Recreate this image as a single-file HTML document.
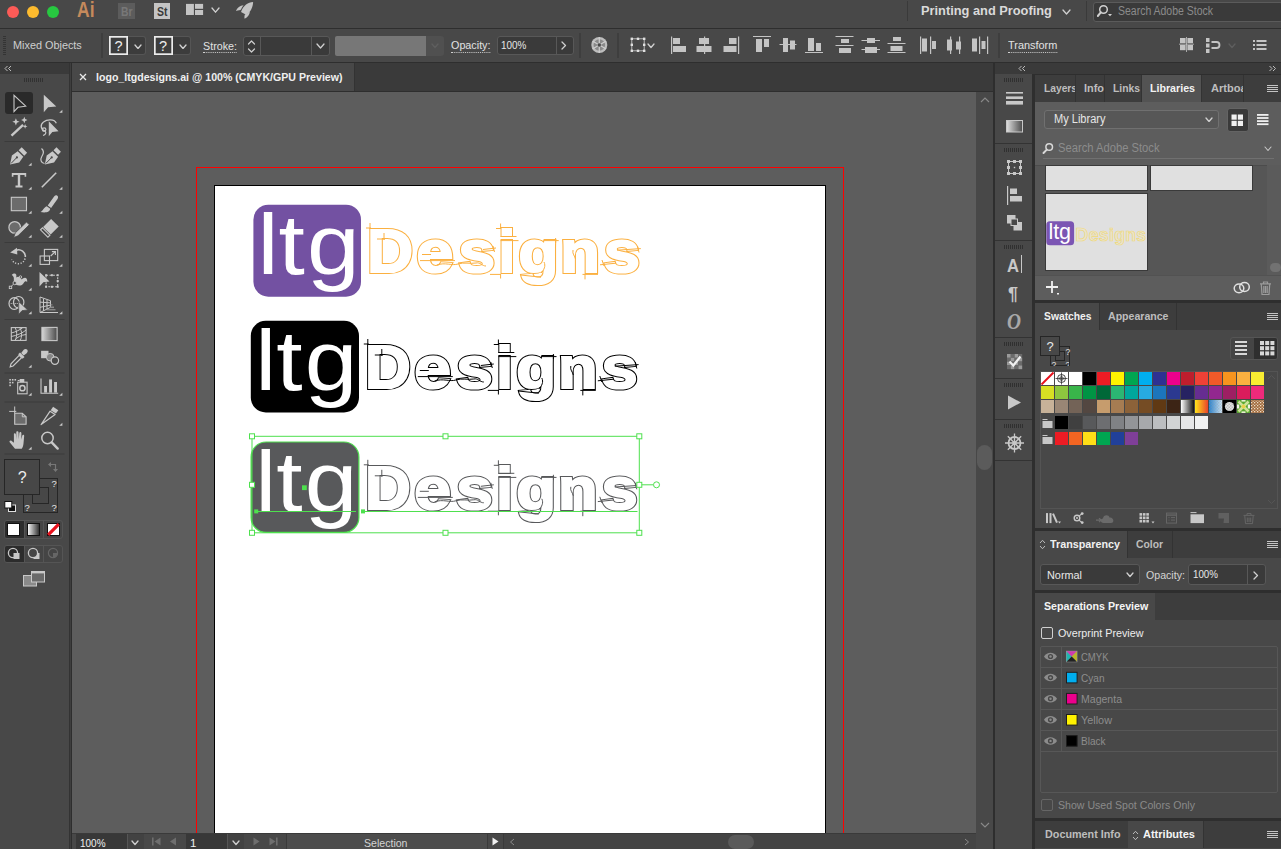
<!DOCTYPE html>
<html lang="en"><head><meta charset="utf-8"><title>logo_ltgdesigns.ai @ 100% (CMYK/GPU Preview)</title>
<style>
html,body{margin:0;padding:0;background:#2e2e2e;}
body{width:1281px;height:849px;overflow:hidden;position:relative;font-family:"Liberation Sans",sans-serif;}
.b{position:absolute;box-sizing:border-box;display:block;}
.t{position:absolute;white-space:nowrap;line-height:1;transform-origin:0 0;display:block;}
</style></head>
<body>
<!-- part_frame -->
<div class="b" style="left:0px;top:0px;width:1281px;height:849px;background:#2e2e2e;"></div>
<div class="b" style="left:0px;top:0px;width:1281px;height:28px;background:#484848;"></div>
<div class="b" style="left:0px;top:29px;width:1281px;height:33px;background:#484848;"></div>
<div class="b" style="left:0px;top:63px;width:69px;height:786px;background:#484848;"></div>
<div class="b" style="left:0px;top:63px;width:69px;height:11px;background:#3a3a3a;"></div>
<div class="b" style="left:69px;top:63px;width:1px;height:786px;background:#333;"></div>
<div class="b" style="left:70px;top:63px;width:1px;height:786px;background:#3e3e3e;"></div>
<div class="b" style="left:72px;top:63px;width:921px;height:28px;background:#3a3a3a;"></div>
<div class="b" style="left:72px;top:63px;width:282px;height:28px;background:#484848;"></div>
<div class="b" style="left:354px;top:63px;width:1px;height:28px;background:#333;"></div>
<div class="b" style="left:72px;top:92px;width:904px;height:741px;background:#5d5d5d;"></div>
<div class="b" style="left:976px;top:92px;width:17px;height:741px;background:#484848;"></div>
<div class="b" style="left:977px;top:445px;width:15px;height:25px;background:#5b5b5b;border-radius:7.5px;"></div>
<div class="b" style="left:72px;top:833px;width:921px;height:16px;background:#484848;"></div>
<div class="b" style="left:995px;top:63px;width:286px;height:11px;background:#3a3a3a;"></div>
<div class="b" style="left:995px;top:74px;width:37px;height:775px;background:#484848;"></div>
<!-- part_canvas -->
<div class="b" style="left:196px;top:167px;width:648px;height:666px;border:1px solid #f00;border-bottom:none;"></div>
<div class="b" style="left:214px;top:185px;width:612px;height:648px;background:#fff;border:1px solid #000;border-bottom:none;"></div>
<svg class="b" style="left:0px;top:0px;" width="1281" height="849"><rect x="253.4" y="204.7" width="107.6" height="92" rx="15" fill="#7351a2"/><text transform="translate(257.46 274) scale(1.1 1)" x="0.00 19.20 45.06" y="0" font-family="Liberation Sans, sans-serif" font-size="86" fill="#fff">ltg</text><text y="272.30" font-family="Liberation Sans, sans-serif" font-weight="bold" stroke-linejoin="miter" stroke-miterlimit="3" fill="#fbb040" stroke="#fbb040" stroke-width="4.20"><tspan x="367.25" font-size="62" textLength="45.82" lengthAdjust="spacingAndGlyphs">D</tspan><tspan x="416.42" font-size="59.5" textLength="36.72" lengthAdjust="spacingAndGlyphs">e</tspan><tspan x="458.50" font-size="59.5" textLength="36.49" lengthAdjust="spacingAndGlyphs">s</tspan><tspan x="498.51" font-size="59.5" textLength="16.64" lengthAdjust="spacingAndGlyphs">i</tspan><tspan x="518.43" font-size="59.5" textLength="39.84" lengthAdjust="spacingAndGlyphs">g</tspan><tspan x="560.32" font-size="59.5" textLength="39.59" lengthAdjust="spacingAndGlyphs">n</tspan><tspan x="603.83" font-size="59.5" textLength="36.14" lengthAdjust="spacingAndGlyphs">s</tspan></text><text y="272.30" font-family="Liberation Sans, sans-serif" font-weight="bold" stroke-linejoin="miter" stroke-miterlimit="3" fill="#fff" stroke="#fff" stroke-width="2.20"><tspan x="367.25" font-size="62" textLength="45.82" lengthAdjust="spacingAndGlyphs">D</tspan><tspan x="416.42" font-size="59.5" textLength="36.72" lengthAdjust="spacingAndGlyphs">e</tspan><tspan x="458.50" font-size="59.5" textLength="36.49" lengthAdjust="spacingAndGlyphs">s</tspan><tspan x="498.51" font-size="59.5" textLength="16.64" lengthAdjust="spacingAndGlyphs">i</tspan><tspan x="518.43" font-size="59.5" textLength="39.84" lengthAdjust="spacingAndGlyphs">g</tspan><tspan x="560.32" font-size="59.5" textLength="39.59" lengthAdjust="spacingAndGlyphs">n</tspan><tspan x="603.83" font-size="59.5" textLength="36.14" lengthAdjust="spacingAndGlyphs">s</tspan></text><path transform="translate(0 0)" d="M366 228H371M370 223V229M377 239H385M384 233V240M422 254.5H431M420 260.6H455M437 265C445 262 452 266 458 264C464 262 470 264 476 263C480 262 482 266 486 266M483 249.5L496 248M493 246L494.5 252M496 228.5H501M500.6 223.5V229M500.6 236.5H516.5M500.6 240.6H518.5M490 274.4H501M500.6 274V278.5M543.7 240.6H558.7M555.6 238V243M520.6 275L541 277.2M544 262C546 266 544 270 541 273M573 250C572 254 575 256 575.5 259M585 274V279.4M582.5 274.4H598M600 264.8L616 263.2M602 260L604 266M617 250.2L640.8 248.6M637.5 246L639 252.5" stroke="#fbb040" stroke-width="1" fill="none"/><rect x="250.8" y="320.8" width="108.2" height="91.7" rx="15" fill="#000"/><text transform="translate(255.26 390.3) scale(1.1 1)" x="0.00 19.20 45.06" y="0" font-family="Liberation Sans, sans-serif" font-size="86" fill="#fff">ltg</text><text y="388.30" font-family="Liberation Sans, sans-serif" font-weight="bold" stroke-linejoin="miter" stroke-miterlimit="3" fill="#000" stroke="#000" stroke-width="4.20"><tspan x="365.05" font-size="62" textLength="45.82" lengthAdjust="spacingAndGlyphs">D</tspan><tspan x="414.22" font-size="59.5" textLength="36.72" lengthAdjust="spacingAndGlyphs">e</tspan><tspan x="456.30" font-size="59.5" textLength="36.49" lengthAdjust="spacingAndGlyphs">s</tspan><tspan x="496.31" font-size="59.5" textLength="16.64" lengthAdjust="spacingAndGlyphs">i</tspan><tspan x="516.23" font-size="59.5" textLength="39.84" lengthAdjust="spacingAndGlyphs">g</tspan><tspan x="558.12" font-size="59.5" textLength="39.59" lengthAdjust="spacingAndGlyphs">n</tspan><tspan x="601.62" font-size="59.5" textLength="36.14" lengthAdjust="spacingAndGlyphs">s</tspan></text><text y="388.30" font-family="Liberation Sans, sans-serif" font-weight="bold" stroke-linejoin="miter" stroke-miterlimit="3" fill="#fff" stroke="#fff" stroke-width="2.20"><tspan x="365.05" font-size="62" textLength="45.82" lengthAdjust="spacingAndGlyphs">D</tspan><tspan x="414.22" font-size="59.5" textLength="36.72" lengthAdjust="spacingAndGlyphs">e</tspan><tspan x="456.30" font-size="59.5" textLength="36.49" lengthAdjust="spacingAndGlyphs">s</tspan><tspan x="496.31" font-size="59.5" textLength="16.64" lengthAdjust="spacingAndGlyphs">i</tspan><tspan x="516.23" font-size="59.5" textLength="39.84" lengthAdjust="spacingAndGlyphs">g</tspan><tspan x="558.12" font-size="59.5" textLength="39.59" lengthAdjust="spacingAndGlyphs">n</tspan><tspan x="601.62" font-size="59.5" textLength="36.14" lengthAdjust="spacingAndGlyphs">s</tspan></text><path transform="translate(-2.2 116)" d="M366 228H371M370 223V229M377 239H385M384 233V240M422 254.5H431M420 260.6H455M437 265C445 262 452 266 458 264C464 262 470 264 476 263C480 262 482 266 486 266M483 249.5L496 248M493 246L494.5 252M496 228.5H501M500.6 223.5V229M500.6 236.5H516.5M500.6 240.6H518.5M490 274.4H501M500.6 274V278.5M543.7 240.6H558.7M555.6 238V243M520.6 275L541 277.2M544 262C546 266 544 270 541 273M573 250C572 254 575 256 575.5 259M585 274V279.4M582.5 274.4H598M600 264.8L616 263.2M602 260L604 266M617 250.2L640.8 248.6M637.5 246L639 252.5" stroke="#000" stroke-width="1" fill="none"/><rect x="251.1" y="442" width="107.8" height="90.4" rx="15" fill="#58595b" stroke="#4ee04e" stroke-width="1.2"/><text transform="translate(255.26 511) scale(1.1 1)" x="0.00 19.20 45.06" y="0" font-family="Liberation Sans, sans-serif" font-size="86" fill="#fff">ltg</text><text y="509.10" font-family="Liberation Sans, sans-serif" font-weight="bold" stroke-linejoin="miter" stroke-miterlimit="3" fill="#58595b" stroke="#58595b" stroke-width="4.20"><tspan x="365.05" font-size="62" textLength="45.82" lengthAdjust="spacingAndGlyphs">D</tspan><tspan x="414.22" font-size="59.5" textLength="36.72" lengthAdjust="spacingAndGlyphs">e</tspan><tspan x="456.30" font-size="59.5" textLength="36.49" lengthAdjust="spacingAndGlyphs">s</tspan><tspan x="496.31" font-size="59.5" textLength="16.64" lengthAdjust="spacingAndGlyphs">i</tspan><tspan x="516.23" font-size="59.5" textLength="39.84" lengthAdjust="spacingAndGlyphs">g</tspan><tspan x="558.12" font-size="59.5" textLength="39.59" lengthAdjust="spacingAndGlyphs">n</tspan><tspan x="601.62" font-size="59.5" textLength="36.14" lengthAdjust="spacingAndGlyphs">s</tspan></text><text y="509.10" font-family="Liberation Sans, sans-serif" font-weight="bold" stroke-linejoin="miter" stroke-miterlimit="3" fill="#fff" stroke="#fff" stroke-width="2.20"><tspan x="365.05" font-size="62" textLength="45.82" lengthAdjust="spacingAndGlyphs">D</tspan><tspan x="414.22" font-size="59.5" textLength="36.72" lengthAdjust="spacingAndGlyphs">e</tspan><tspan x="456.30" font-size="59.5" textLength="36.49" lengthAdjust="spacingAndGlyphs">s</tspan><tspan x="496.31" font-size="59.5" textLength="16.64" lengthAdjust="spacingAndGlyphs">i</tspan><tspan x="516.23" font-size="59.5" textLength="39.84" lengthAdjust="spacingAndGlyphs">g</tspan><tspan x="558.12" font-size="59.5" textLength="39.59" lengthAdjust="spacingAndGlyphs">n</tspan><tspan x="601.62" font-size="59.5" textLength="36.14" lengthAdjust="spacingAndGlyphs">s</tspan></text><path transform="translate(-2.2 236.8)" d="M366 228H371M370 223V229M377 239H385M384 233V240M422 254.5H431M420 260.6H455M437 265C445 262 452 266 458 264C464 262 470 264 476 263C480 262 482 266 486 266M483 249.5L496 248M493 246L494.5 252M496 228.5H501M500.6 223.5V229M500.6 236.5H516.5M500.6 240.6H518.5M490 274.4H501M500.6 274V278.5M543.7 240.6H558.7M555.6 238V243M520.6 275L541 277.2M544 262C546 266 544 270 541 273M573 250C572 254 575 256 575.5 259M585 274V279.4M582.5 274.4H598M600 264.8L616 263.2M602 260L604 266M617 250.2L640.8 248.6M637.5 246L639 252.5" stroke="#58595b" stroke-width="1" fill="none"/><rect x="252" y="436.3" width="387.3" height="96.5" fill="none" stroke="#4ee04e" stroke-width="1"/><path d="M256 511.5H356M363 511.5H637.5" stroke="#4ee04e" stroke-width="1"/><path d="M639 484.8H653" stroke="#4ee04e" stroke-width="1"/><circle cx="656.5" cy="484.8" r="3" fill="#fff" stroke="#4ee04e" stroke-width="1"/><rect x="249.5" y="433.8" width="5" height="5" fill="#fff" stroke="#4ee04e" stroke-width="1"/><rect x="249.5" y="482.3" width="5" height="5" fill="#fff" stroke="#4ee04e" stroke-width="1"/><rect x="249.5" y="530.3" width="5" height="5" fill="#fff" stroke="#4ee04e" stroke-width="1"/><rect x="443.0" y="433.8" width="5" height="5" fill="#fff" stroke="#4ee04e" stroke-width="1"/><rect x="443.0" y="530.3" width="5" height="5" fill="#fff" stroke="#4ee04e" stroke-width="1"/><rect x="636.8" y="433.8" width="5" height="5" fill="#fff" stroke="#4ee04e" stroke-width="1"/><rect x="636.8" y="482.3" width="5" height="5" fill="#fff" stroke="#4ee04e" stroke-width="1"/><rect x="636.8" y="530.3" width="5" height="5" fill="#fff" stroke="#4ee04e" stroke-width="1"/><rect x="254.2" y="509.4" width="4" height="4" fill="#4ee04e"/><rect x="361" y="509.4" width="4" height="4" fill="#4ee04e"/><rect x="302" y="485.3" width="4.8" height="4.8" fill="#4ee04e"/></svg>
<!-- part_top -->
<div class="b" style="left:7px;top:6px;width:12px;height:12px;background:#fc5b57;border-radius:50%;"></div>
<div class="b" style="left:27px;top:6px;width:12px;height:12px;background:#fdbb2e;border-radius:50%;"></div>
<div class="b" style="left:47px;top:6px;width:12px;height:12px;background:#27c840;border-radius:50%;"></div>
<span class="t" style="left:77.00px;top:0.00px;font-size:21.5px;color:#c58a5c;font-family:'Liberation Sans',sans-serif;font-weight:bold;transform:scaleX(0.8140);">Ai</span>
<div class="b" style="left:118px;top:3px;width:16.5px;height:16px;background:#5c5c5c;"></div>
<span class="t" style="left:120.50px;top:5.50px;font-size:12px;color:#787878;font-family:'Liberation Sans',sans-serif;font-weight:bold;transform:scaleX(0.8623);">Br</span>
<div class="b" style="left:153.5px;top:3px;width:16.5px;height:16px;background:#c4c4c4;"></div>
<span class="t" style="left:156.50px;top:5.50px;font-size:12px;color:#3a3a3a;font-family:'Liberation Sans',sans-serif;font-weight:bold;transform:scaleX(0.8749);">St</span>
<svg class="b" style="left:186px;top:3px;" width="18" height="13"><rect x="0" y="0.9" width="7.9" height="11.1" fill="#c4c4c4"/><rect x="9" y="0.9" width="8.1" height="4.9" fill="#c4c4c4"/><rect x="9" y="7" width="8.1" height="5" fill="#c4c4c4"/></svg>
<svg class="b" style="left:211px;top:6.8px;" width="9" height="6.2"><path d="M1 1L4.5 5.2L8 1" fill="none" stroke="#d0d0d0" stroke-width="1.3" stroke-linecap="round" stroke-linejoin="round"/></svg>
<svg class="b" style="left:235px;top:1px;" width="20" height="19"><path d="M18.1 0.9C13 1.2 8.5 4 6 10.9L11.2 13.7C16 10.8 18 5.5 18.1 0.9Z" fill="#c4c4c4"/><path d="M8.6 4.3C5 4.6 2.2 6.8 0.9 10C3.6 9.6 5.2 9.2 6 8.6C6.6 7 7.4 5.6 8.6 4.3Z" fill="#c4c4c4"/><path d="M14.8 10.4C14.8 13.5 12.6 16.4 9.6 17.8C9.3 16 9.4 14.6 9.9 13.5C11.8 12.8 13.4 11.8 14.8 10.4Z" fill="#c4c4c4"/></svg>
<div class="b" style="left:907px;top:1px;width:1px;height:20px;background:#3a3a3a;"></div>
<span class="t" style="left:921.40px;top:4.00px;font-size:13px;color:#dadada;font-family:'Liberation Sans',sans-serif;font-weight:bold;transform:scaleX(0.9851);">Printing and Proofing</span>
<svg class="b" style="left:1062px;top:8.5px;" width="9" height="6"><path d="M1 1L4.5 5L8 1" fill="none" stroke="#d0d0d0" stroke-width="1.3" stroke-linecap="round" stroke-linejoin="round"/></svg>
<div class="b" style="left:1086px;top:1px;width:1px;height:20px;background:#3a3a3a;"></div>
<div class="b" style="left:1092.5px;top:1.5px;width:190px;height:20px;background:#3a3a3a;border:1px solid #5b5b5b;border-radius:3px;"></div>
<svg class="b" style="left:1097px;top:4px;" width="18" height="15"><circle cx="6.5" cy="5.5" r="3.8" fill="none" stroke="#d0d0d0" stroke-width="1.5"/><path d="M3.8 8.3L0.8 12" stroke="#d0d0d0" stroke-width="2" stroke-linecap="round"/><path d="M11 10h4l-2 2.2z" fill="#d0d0d0"/></svg>
<span class="t" style="left:1118.00px;top:5.00px;font-size:12px;color:#8b8b8b;font-family:'Liberation Sans',sans-serif;transform:scaleX(0.8736);">Search Adobe Stock</span>
<div class="b" style="left:3px;top:36px;width:3px;height:1px;background:#343434;"></div><div class="b" style="left:3px;top:38px;width:3px;height:1px;background:#343434;"></div><div class="b" style="left:3px;top:40px;width:3px;height:1px;background:#343434;"></div><div class="b" style="left:3px;top:42px;width:3px;height:1px;background:#343434;"></div><div class="b" style="left:3px;top:44px;width:3px;height:1px;background:#343434;"></div><div class="b" style="left:3px;top:46px;width:3px;height:1px;background:#343434;"></div><div class="b" style="left:3px;top:48px;width:3px;height:1px;background:#343434;"></div><div class="b" style="left:3px;top:50px;width:3px;height:1px;background:#343434;"></div><div class="b" style="left:3px;top:52px;width:3px;height:1px;background:#343434;"></div><div class="b" style="left:3px;top:54px;width:3px;height:1px;background:#343434;"></div>
<span class="t" style="left:13.20px;top:40.00px;font-size:11.5px;color:#cfcfcf;font-family:'Liberation Sans',sans-serif;transform:scaleX(0.9443);">Mixed Objects</span>
<div class="b" style="left:101px;top:33px;width:2px;height:25px;background:#3e3e3e;"></div>
<div class="b" style="left:128px;top:36px;width:18px;height:19px;background:#3c3c3c;border-radius:0 3px 3px 0;border:1px solid #555;border-left:none;"></div><svg class="b" style="left:109px;top:36px;" width="19" height="19"><rect x="0.85" y="0.85" width="17.3" height="17.3" fill="#3d3d3d" stroke="#ececec" stroke-width="1.7"/></svg><span class="t" style="left:114.60px;top:39.40px;font-size:14.5px;color:#ececec;font-family:'Liberation Sans',sans-serif;transform:scaleX(1.0000);">?</span><svg class="b" style="left:134px;top:43.5px;" width="8" height="5.5"><path d="M1 1L4.0 4.5L7 1" fill="none" stroke="#d0d0d0" stroke-width="1.3" stroke-linecap="round" stroke-linejoin="round"/></svg>
<div class="b" style="left:172.5px;top:36px;width:18px;height:19px;background:#3c3c3c;border-radius:0 3px 3px 0;border:1px solid #555;border-left:none;"></div><svg class="b" style="left:153.5px;top:36px;" width="19" height="19"><rect x="0.85" y="0.85" width="17.3" height="17.3" fill="#3d3d3d" stroke="#ececec" stroke-width="1.7"/></svg><span class="t" style="left:159.10px;top:39.40px;font-size:14.5px;color:#ececec;font-family:'Liberation Sans',sans-serif;transform:scaleX(1.0000);">?</span><svg class="b" style="left:178.5px;top:43.5px;" width="8" height="5.5"><path d="M1 1L4.0 4.5L7 1" fill="none" stroke="#d0d0d0" stroke-width="1.3" stroke-linecap="round" stroke-linejoin="round"/></svg>
<span class="t" style="left:202.50px;top:40.50px;font-size:11.5px;color:#e2e2e2;font-family:'Liberation Sans',sans-serif;transform:scaleX(0.9332);border-bottom:1px dotted #d0d0d0;padding-bottom:0;">Stroke:</span>
<div class="b" style="left:242.5px;top:35.5px;width:87px;height:20px;background:#3a3a3a;border:1px solid #585858;border-radius:3px;"></div>
<div class="b" style="left:260px;top:36.5px;width:1px;height:18px;background:#585858;"></div>
<div class="b" style="left:311px;top:36.5px;width:1px;height:18px;background:#585858;"></div>
<svg class="b" style="left:247px;top:38.5px;" width="9" height="15"><path d="M1.5 5L4.5 2L7.5 5M1.5 10L4.5 13L7.5 10" fill="none" stroke="#d0d0d0" stroke-width="1.2" stroke-linecap="round" stroke-linejoin="round"/></svg>
<svg class="b" style="left:316px;top:43px;" width="9" height="6"><path d="M1 1L4.5 5L8 1" fill="none" stroke="#d0d0d0" stroke-width="1.3" stroke-linecap="round" stroke-linejoin="round"/></svg>
<div class="b" style="left:335px;top:35.5px;width:109px;height:20px;background:#505050;border-radius:3px;"></div>
<div class="b" style="left:335px;top:35.5px;width:90.5px;height:20px;background:#777777;border-radius:2px 0 0 2px;"></div>
<svg class="b" style="left:431px;top:43px;" width="8" height="5.5"><path d="M1 1L4.0 4.5L7 1" fill="none" stroke="#5e5e5e" stroke-width="1.3" stroke-linecap="round" stroke-linejoin="round"/></svg>
<span class="t" style="left:450.50px;top:40.00px;font-size:11.5px;color:#e2e2e2;font-family:'Liberation Sans',sans-serif;transform:scaleX(0.9364);border-bottom:1px dotted #d0d0d0;padding-bottom:0;">Opacity:</span>
<div class="b" style="left:497px;top:35.5px;width:76.5px;height:19.5px;background:#3a3a3a;border:1px solid #585858;border-radius:3px;"></div>
<div class="b" style="left:555.5px;top:36.5px;width:1px;height:17.5px;background:#585858;"></div>
<span class="t" style="left:500.70px;top:40.00px;font-size:11.5px;color:#e6e6e6;font-family:'Liberation Sans',sans-serif;transform:scaleX(0.8602);">100%</span>
<svg class="b" style="left:561px;top:40.5px;" width="5.5" height="9"><path d="M1 1L4.5 4.5L1 8" fill="none" stroke="#d0d0d0" stroke-width="1.3" stroke-linecap="round" stroke-linejoin="round"/></svg>
<div class="b" style="left:579px;top:33px;width:2px;height:25px;background:#3e3e3e;"></div>
<svg class="b" style="left:590px;top:36px;" width="19" height="19"><circle cx="9.3" cy="9" r="8" fill="#bdbdbd"/><circle cx="9.3" cy="9" r="5.8" fill="#8a8a8a"/><path d="M9.3 1V17M2.4 5L16.2 13M2.4 13L16.2 5" stroke="#cfcfcf" stroke-width="1.2"/><circle cx="9.3" cy="9" r="1.7" fill="#4a4a4a"/></svg>
<div class="b" style="left:617px;top:33px;width:2px;height:25px;background:#3e3e3e;"></div>
<svg class="b" style="left:630px;top:37px;" width="17" height="16"><rect x="1.8" y="1.8" width="12.4" height="12" fill="none" stroke="#c4c4c4" stroke-width="0.9"/><rect x="0.6" y="0.6" width="2.4" height="2.4" fill="#e0e0e0"/><rect x="0.6" y="6.6" width="2.4" height="2.4" fill="#e0e0e0"/><rect x="0.6" y="12.6" width="2.4" height="2.4" fill="#e0e0e0"/><rect x="6.8" y="0.6" width="2.4" height="2.4" fill="#e0e0e0"/><rect x="6.8" y="12.6" width="2.4" height="2.4" fill="#e0e0e0"/><rect x="13" y="0.6" width="2.4" height="2.4" fill="#e0e0e0"/><rect x="13" y="6.6" width="2.4" height="2.4" fill="#e0e0e0"/><rect x="13" y="12.6" width="2.4" height="2.4" fill="#e0e0e0"/></svg>
<svg class="b" style="left:646.5px;top:43px;" width="8" height="5.5"><path d="M1 1L4.0 4.5L7 1" fill="none" stroke="#d0d0d0" stroke-width="1.3" stroke-linecap="round" stroke-linejoin="round"/></svg>
<svg class="b" style="left:0px;top:0px;" width="1000" height="62"><rect x="671" y="36.5" width="1.2" height="17.5" fill="#c4c4c4"/><rect x="673" y="38" width="7" height="6" fill="#c4c4c4"/><rect x="673" y="46" width="13" height="6" fill="#c4c4c4"/><rect x="704" y="36.5" width="1.2" height="17.5" fill="#c4c4c4"/><rect x="699" y="38" width="10" height="6" fill="#c4c4c4"/><rect x="696.5" y="46" width="15" height="6" fill="#c4c4c4"/><rect x="738" y="36.5" width="1.2" height="17.5" fill="#c4c4c4"/><rect x="729" y="38" width="7.5" height="6" fill="#c4c4c4"/><rect x="723.5" y="46" width="13" height="6" fill="#c4c4c4"/><rect x="753" y="36" width="18" height="1" fill="#c4c4c4"/><rect x="756" y="39" width="6" height="13" fill="#c4c4c4"/><rect x="764" y="39" width="5" height="8" fill="#c4c4c4"/><rect x="779.5" y="44" width="17" height="1" fill="#c4c4c4"/><rect x="783" y="38" width="5" height="14" fill="#c4c4c4"/><rect x="790" y="40.5" width="5" height="9" fill="#c4c4c4"/><rect x="805" y="52" width="18" height="1" fill="#c4c4c4"/><rect x="808" y="38" width="6" height="13" fill="#c4c4c4"/><rect x="816" y="43" width="5" height="8" fill="#c4c4c4"/><rect x="835.5" y="36" width="18" height="1" fill="#c4c4c4"/><rect x="841" y="39" width="8" height="4" fill="#c4c4c4"/><rect x="835.5" y="45" width="18" height="1" fill="#c4c4c4"/><rect x="839" y="48" width="12" height="5" fill="#c4c4c4"/><rect x="861.5" y="40" width="18.5" height="1" fill="#c4c4c4"/><rect x="867" y="38" width="8" height="5" fill="#c4c4c4"/><rect x="861.5" y="49" width="18.5" height="1" fill="#c4c4c4"/><rect x="865" y="47" width="12" height="6" fill="#c4c4c4"/><rect x="893" y="37" width="8" height="4" fill="#c4c4c4"/><rect x="887.5" y="43" width="18" height="1" fill="#c4c4c4"/><rect x="890.5" y="46" width="12" height="5" fill="#c4c4c4"/><rect x="887.5" y="52" width="18" height="1" fill="#c4c4c4"/><rect x="920" y="36.5" width="1.2" height="17.5" fill="#c4c4c4"/><rect x="922" y="38.5" width="5" height="13" fill="#c4c4c4"/><rect x="930" y="36.5" width="1.2" height="17.5" fill="#c4c4c4"/><rect x="932" y="41" width="4" height="8" fill="#c4c4c4"/><rect x="950" y="36.5" width="1.2" height="17.5" fill="#c4c4c4"/><rect x="947" y="39.5" width="5" height="11" fill="#c4c4c4"/><rect x="959" y="36.5" width="1.2" height="17.5" fill="#c4c4c4"/><rect x="956" y="41.5" width="5" height="8" fill="#c4c4c4"/><rect x="972" y="38.5" width="5" height="13" fill="#c4c4c4"/><rect x="979" y="36.5" width="1.2" height="17.5" fill="#c4c4c4"/><rect x="981.5" y="41" width="4" height="8" fill="#c4c4c4"/><rect x="987" y="36.5" width="1.2" height="17.5" fill="#c4c4c4"/></svg>
<div class="b" style="left:998px;top:33px;width:2px;height:25px;background:#3e3e3e;"></div>
<span class="t" style="left:1007.70px;top:40.00px;font-size:11.5px;color:#e2e2e2;font-family:'Liberation Sans',sans-serif;transform:scaleX(0.9486);border-bottom:1px dotted #d0d0d0;padding-bottom:0;">Transform</span>
<svg class="b" style="left:1179px;top:37px;" width="16" height="16"><rect x="1" y="1" width="5.6" height="5.2" fill="#c4c4c4"/><rect x="1" y="8" width="5.6" height="5.2" fill="#c4c4c4"/><rect x="8.4" y="1" width="5.6" height="5.2" fill="#c4c4c4"/><rect x="8.4" y="8" width="5.6" height="5.2" fill="#c4c4c4"/><path d="M7.5 0V15M0 7.2H15" stroke="#c4c4c4" stroke-width="0.8"/></svg>
<svg class="b" style="left:1205px;top:37px;" width="18" height="17"><rect x="1" y="1" width="3.5" height="4" fill="#c4c4c4"/><rect x="1" y="6.5" width="3.5" height="4" fill="#c4c4c4"/><rect x="1" y="12" width="3.5" height="4" fill="#c4c4c4"/><path d="M6.5 5H11.5a3 3 0 0 1 0 6H6.5" fill="none" stroke="#c4c4c4" stroke-width="1.8"/></svg>
<svg class="b" style="left:1228px;top:43px;" width="8" height="5.5"><path d="M1 1L4.0 4.5L7 1" fill="none" stroke="#5e5e5e" stroke-width="1.3" stroke-linecap="round" stroke-linejoin="round"/></svg>
<svg class="b" style="left:1252px;top:39px;" width="16" height="12"><rect x="1" y="1" width="2" height="2" fill="#c4c4c4"/><rect x="4.5" y="1" width="10" height="2" fill="#c4c4c4"/><rect x="1" y="5" width="2" height="2" fill="#c4c4c4"/><rect x="4.5" y="5" width="10" height="2" fill="#c4c4c4"/><rect x="1" y="9" width="2" height="2" fill="#c4c4c4"/><rect x="4.5" y="9" width="10" height="2" fill="#c4c4c4"/></svg>
<svg class="b" style="left:78px;top:72px;" width="10" height="10"><path d="M2 2L8 8M8 2L2 8" stroke="#e8e8e8" stroke-width="1.3"/></svg>
<span class="t" style="left:96.00px;top:71.50px;font-size:11.5px;color:#efefef;font-family:'Liberation Sans',sans-serif;font-weight:bold;transform:scaleX(0.9216);">logo_ltgdesigns.ai @ 100% (CMYK/GPU Preview)</span>
<!-- part_tools -->
<svg class="b" style="left:4px;top:65px;" width="9" height="7"><path d="M3.5 1L1 3.5L3.5 6M7 1L4.5 3.5L7 6" fill="none" stroke="#bdbdbd" stroke-width="1"/></svg>
<div class="b" style="left:24px;top:78px;width:1px;height:4px;background:#313131;"></div><div class="b" style="left:26px;top:78px;width:1px;height:4px;background:#313131;"></div><div class="b" style="left:28px;top:78px;width:1px;height:4px;background:#313131;"></div><div class="b" style="left:30px;top:78px;width:1px;height:4px;background:#313131;"></div><div class="b" style="left:32px;top:78px;width:1px;height:4px;background:#313131;"></div><div class="b" style="left:34px;top:78px;width:1px;height:4px;background:#313131;"></div><div class="b" style="left:36px;top:78px;width:1px;height:4px;background:#313131;"></div><div class="b" style="left:38px;top:78px;width:1px;height:4px;background:#313131;"></div><div class="b" style="left:40px;top:78px;width:1px;height:4px;background:#313131;"></div><div class="b" style="left:42px;top:78px;width:1px;height:4px;background:#313131;"></div>
<div class="b" style="left:5px;top:92px;width:28px;height:22px;background:#2a2a2a;border-radius:3px;"></div>
<svg class="b" style="left:0px;top:0px;" width="70" height="470"><defs><linearGradient id="gradtool" x1="0" x2="1"><stop offset="0" stop-color="#d8d8d8"/><stop offset="1" stop-color="#4a4a4a"/></linearGradient></defs><g transform="translate(6.7 91.0)"><path d="M7.3 4.3V20.6L11.3 16.3L19 15.2Z" fill="#2a2a2a" stroke="#c8c8c8" stroke-width="1.1" stroke-linejoin="miter"/></g><g transform="translate(37.5 91.0)"><path d="M6.3 3.8V21.2L10.6 16.3L18.8 15.5Z" fill="#c8c8c8"/></g><path d="M62.4 112.8V109.7L59.2 112.8Z" fill="#c8c8c8"/><g transform="translate(6.7 115.0)"><path d="M4.8 20.6L16.4 9.8" stroke="#c8c8c8" stroke-width="2.4"/><path d="M9.2 3.1999999999999997L10.21 5.79L12.799999999999999 6.8L10.21 7.81L9.2 10.4L8.19 7.81L5.6 6.8L8.19 5.79Z" fill="#c8c8c8"/><path d="M17.6 1.7999999999999998L18.50 4.10L20.8 5L18.50 5.90L17.6 8.2L16.70 5.90L14.400000000000002 5L16.70 4.10Z" fill="#c8c8c8"/><path d="M18.4 9.0L19.07 10.73L20.799999999999997 11.4L19.07 12.07L18.4 13.8L17.73 12.07L15.999999999999998 11.4L17.73 10.73Z" fill="#c8c8c8"/></g><g transform="translate(37.5 115.0)"><path d="M7.5 16C3 14.5 2.5 9.5 6 7C10 4 17 4.2 18.8 8.2" fill="none" stroke="#c8c8c8" stroke-width="1.3"/><circle cx="6.6" cy="14.6" r="1.8" fill="none" stroke="#c8c8c8" stroke-width="1.2"/><path d="M7.8 16.2C9 18 8 20 5.5 20.5" fill="none" stroke="#c8c8c8" stroke-width="1.2"/><path d="M11.3 6.3V21.2L14.8 17.1L21 16.2Z" fill="#c8c8c8"/></g><g transform="translate(6.7 144.0)"><path d="M3.3 20.6L5.2 11.5L11 7.2L16.6 12.8L12.5 18.5Z" fill="#c8c8c8"/><path d="M4.4 19.4L9.8 13.8" stroke="#474747" stroke-width="1"/><circle cx="10.2" cy="13.4" r="1.1" fill="#474747"/><path d="M12 6.2L15 3.3L20.4 8.8L17.6 11.8Z" fill="#c8c8c8"/></g><path d="M31.6 165.8V162.7L28.4 165.8Z" fill="#c8c8c8"/><g transform="translate(37.5 144.0)"><path d="M7.3 20.6L9.2 11.5L15 7.2L20.6 12.8L16.5 18.5Z" fill="#c8c8c8"/><path d="M8.4 19.4L13.8 13.8" stroke="#474747" stroke-width="1"/><circle cx="14.2" cy="13.4" r="1.1" fill="#474747"/><path d="M16 6.2L19 3.3L23.4 7.8L20.6 10.8Z" fill="#c8c8c8"/><path d="M4 4.5C7 7 6 10 4.3 12.5C2.5 15.5 3.5 19 7 19.5" fill="none" stroke="#c8c8c8" stroke-width="1.2"/></g><g transform="translate(6.7 168.0)"><path d="M5.1 4.9H19.5V8.7H17.9V6.9H13.5V17.6H15.8V19.4H8.8V17.6H11.1V6.9H6.7V8.7H5.1Z" fill="#c8c8c8"/></g><path d="M31.6 189.8V186.7L28.4 189.8Z" fill="#c8c8c8"/><g transform="translate(37.5 168.0)"><path d="M4.3 19.2L18.7 4.8" stroke="#c8c8c8" stroke-width="1.6"/></g><path d="M62.4 189.8V186.7L59.2 189.8Z" fill="#c8c8c8"/><g transform="translate(6.7 192.0)"><rect x="4.6" y="5.3" width="15.2" height="13.4" fill="#6c6c6c" stroke="#c8c8c8" stroke-width="1.1"/></g><path d="M31.6 213.8V210.7L28.4 213.8Z" fill="#c8c8c8"/><g transform="translate(37.5 192.0)"><path d="M19.4 3.4C20.8 4 20.9 5.6 20 7L13.6 15.9L10.2 13.4L16.6 4.6C17.5 3.4 18.5 3 19.4 3.4Z" fill="#c8c8c8"/><path d="M9.3 14.3L12.7 16.8C12.6 20 8 21.2 3 20C5.6 18.8 6.2 15.4 9.3 14.3Z" fill="#c8c8c8"/></g><path d="M62.4 213.8V210.7L59.2 213.8Z" fill="#c8c8c8"/><g transform="translate(6.7 216.0)"><circle cx="8" cy="11.4" r="5.8" fill="#6c6c6c" stroke="#c8c8c8" stroke-width="1.2"/><path d="M7 21.5L8.5 17L19.8 6L22.6 8.8L11.3 19.8Z" fill="#c8c8c8" stroke="#474747" stroke-width="0.8"/></g><path d="M31.6 237.8V234.7L28.4 237.8Z" fill="#c8c8c8"/><g transform="translate(37.5 216.0)"><path d="M13.6 3L21.2 10.6L13.2 18.6L5.6 11Z" fill="#c8c8c8"/><path d="M5 11.8L12.4 19.2L10.4 21.2L3 13.8Z" fill="none" stroke="#c8c8c8" stroke-width="1.1"/></g><path d="M62.4 237.8V234.7L59.2 237.8Z" fill="#c8c8c8"/><g transform="translate(6.7 245.0)"><path d="M9.5 5.2C14 3.5 19 7 18.6 12" fill="none" stroke="#c8c8c8" stroke-width="1.6"/><path d="M3.5 7.5L10.3 2.8L10.6 9.6Z" fill="#c8c8c8"/><path d="M18.3 13.5C17 19.5 8.5 21 5 14.5" fill="none" stroke="#c8c8c8" stroke-width="1.5" stroke-dasharray="1.2 1.6"/></g><path d="M31.6 266.8V263.7L28.4 266.8Z" fill="#c8c8c8"/><g transform="translate(37.5 245.0)"><rect x="6.9" y="4.4" width="13.3" height="11.2" fill="none" stroke="#c8c8c8" stroke-width="1.1"/><rect x="2.6" y="11" width="9.4" height="8.4" fill="none" stroke="#c8c8c8" stroke-width="1.1"/><path d="M13.2 11L17.6 6.8M14.4 6.6H17.9V10" fill="none" stroke="#c8c8c8" stroke-width="1.1"/></g><path d="M62.4 266.8V263.7L59.2 266.8Z" fill="#c8c8c8"/><g transform="translate(6.7 269.0)"><path d="M5 6C8 3 10.5 5 9.5 8.5C12 6.5 14 9 15 10.5C17 8 21 7.5 20.5 13C19.5 11.5 18 12 17 14C15.5 17.5 9 17.5 7.5 13.5C6.5 11 8.5 8 5 6Z" fill="#c8c8c8"/><path d="M3.7 18.3L13.8 8" stroke="#c8c8c8" stroke-width="0.9"/><circle cx="8" cy="14" r="1.7" fill="#474747" stroke="#c8c8c8" stroke-width="0.9"/><rect x="2.6" y="17.2" width="2.4" height="2.4" fill="#474747" stroke="#c8c8c8" stroke-width="0.9"/><circle cx="13.8" cy="8" r="1.2" fill="#474747" stroke="#c8c8c8" stroke-width="0.9"/></g><path d="M31.6 290.8V287.7L28.4 290.8Z" fill="#c8c8c8"/><g transform="translate(37.5 269.0)"><path d="M2 3V17.5L5.8 13.2L12 12.6Z" fill="#c8c8c8"/><rect x="8.6" y="6.2" width="11.6" height="11.6" fill="none" stroke="#c8c8c8" stroke-width="1.1" stroke-dasharray="2 1.4"/><rect x="7.6" y="5.2" width="2" height="2" fill="#c8c8c8"/><rect x="19.2" y="5.2" width="2" height="2" fill="#c8c8c8"/><rect x="7.6" y="16.8" width="2" height="2" fill="#c8c8c8"/><rect x="19.2" y="16.8" width="2" height="2" fill="#c8c8c8"/><rect x="13.4" y="5.2" width="2" height="2" fill="#c8c8c8"/><rect x="13.4" y="16.8" width="2" height="2" fill="#c8c8c8"/><rect x="19.2" y="11" width="2" height="2" fill="#c8c8c8"/></g><g transform="translate(6.7 292.5)"><ellipse cx="7.5" cy="11" rx="5.2" ry="5.8" fill="none" stroke="#c8c8c8" stroke-width="1.2"/><ellipse cx="12" cy="9.8" rx="5.2" ry="5.8" fill="none" stroke="#c8c8c8" stroke-width="1.2"/><path d="M4 11H12" stroke="#c8c8c8" stroke-width="1.2" stroke-dasharray="1 1"/><path d="M12 9V22L15.3 18.2L21 17.4Z" fill="#c8c8c8" stroke="#474747" stroke-width="0.8"/></g><path d="M31.6 314.3V311.2L28.4 314.3Z" fill="#c8c8c8"/><g transform="translate(37.5 292.5)"><path d="M2.5 4.5V20L13 14.8V8.2Z M6 6.2V18.2 M9.5 7.5V16.5 M2.5 9.6L13 10.4 M2.5 14.8L13 12.6" fill="none" stroke="#c8c8c8" stroke-width="1"/><path d="M2.5 20H20.5" stroke="#c8c8c8" stroke-width="1"/><path d="M9 17.3H18" stroke="#a0a0a0" stroke-width="1"/><path d="M12 14.8H16.5" stroke="#8c8c8c" stroke-width="1.6"/><path d="M13.2 12.3H15" stroke="#777" stroke-width="1.6"/></g><path d="M62.4 314.3V311.2L59.2 314.3Z" fill="#c8c8c8"/><g transform="translate(6.7 322.0)"><rect x="4.6" y="5.6" width="14.8" height="12.8" fill="none" stroke="#c8c8c8" stroke-width="1.1"/><path d="M4.6 11C9 10 14 7.5 16 5.6M4.6 14.5C10 13.5 16 11 19.4 8M8 18.4C10 15 15 13 19.4 12.5M8.3 5.6C10.5 9 10.5 14 8.5 18.4M13 5.6C15.5 9.5 15.5 14.5 13.5 18.4" fill="none" stroke="#c8c8c8" stroke-width="1"/></g><g transform="translate(37.5 322.0)"><rect x="4.4" y="5.4" width="15.2" height="13.2" fill="url(#gradtool)" stroke="#c8c8c8" stroke-width="1.1"/></g><g transform="translate(6.7 346.0)"><path d="M3.5 20.8L4.3 17.8L12.5 9.4L14.8 11.7L6.4 20Z" fill="none" stroke="#c8c8c8" stroke-width="1.2"/><path d="M11.5 8.2L13.3 6.4L17.8 10.9L16 12.7Z" fill="#c8c8c8"/><path d="M14.5 7L17 3.8C18 2.6 19.8 2.6 20.6 3.8C21.4 5 21 6.2 20 7.2L17 9.6Z" fill="#c8c8c8"/></g><path d="M31.6 367.8V364.7L28.4 367.8Z" fill="#c8c8c8"/><g transform="translate(37.5 346.0)"><rect x="3.6" y="4.8" width="7.4" height="7.4" fill="#c8c8c8"/><circle cx="12.7" cy="11.2" r="3.8" fill="#858585" stroke="#c8c8c8" stroke-width="1"/><circle cx="17.4" cy="14.6" r="3.7" fill="#474747" stroke="#c8c8c8" stroke-width="1.2"/></g><g transform="translate(6.7 374.0)"><rect x="2.6" y="5" width="1.6" height="1.6" fill="#c8c8c8"/><rect x="5.2" y="5" width="1.6" height="1.6" fill="#c8c8c8"/><rect x="7.8" y="5" width="1.6" height="1.6" fill="#c8c8c8"/><rect x="2.6" y="7.8" width="1.6" height="1.6" fill="#c8c8c8"/><rect x="5.2" y="7.8" width="1.6" height="1.6" fill="#c8c8c8"/><rect x="2.6" y="10.6" width="1.6" height="1.6" fill="#c8c8c8"/><rect x="11" y="8.2" width="9.4" height="11.6" fill="none" stroke="#c8c8c8" stroke-width="1.1"/><rect x="13" y="5" width="4.6" height="3.2" fill="#c8c8c8"/><path d="M11 6.5H13" stroke="#c8c8c8" stroke-width="1"/><circle cx="15.7" cy="14.2" r="2.6" fill="none" stroke="#c8c8c8" stroke-width="1.5"/></g><path d="M31.6 395.8V392.7L28.4 395.8Z" fill="#c8c8c8"/><g transform="translate(37.5 374.0)"><path d="M3.5 4.5V19.3H20.7" fill="none" stroke="#c8c8c8" stroke-width="1.1"/><rect x="6.6" y="12" width="2.9" height="6.6" fill="#c8c8c8"/><rect x="11.6" y="5.4" width="2.9" height="13.2" fill="#c8c8c8"/><rect x="16.6" y="8" width="2.9" height="10.6" fill="#c8c8c8"/></g><path d="M62.4 395.8V392.7L59.2 395.8Z" fill="#c8c8c8"/><g transform="translate(6.7 404.0)"><path d="M2.5 7.4H9.6M8 2.5V9" stroke="#c8c8c8" stroke-width="1"/><path d="M8 9.2H15.6L19.4 12.8V20.2H8Z" fill="#6c6c6c" stroke="#c8c8c8" stroke-width="1.1"/><path d="M15.6 9.2V12.8H19.4" fill="none" stroke="#c8c8c8" stroke-width="1"/></g><g transform="translate(37.5 404.0)"><path d="M3.6 20.6L12.6 7.2L17.6 10.4Z" fill="none" stroke="#c8c8c8" stroke-width="1.2" stroke-linejoin="round"/><path d="M13.2 6.2L15.6 2.8L20.8 6.2L18.4 9.6Z" fill="#c8c8c8"/></g><path d="M62.4 425.8V422.7L59.2 425.8Z" fill="#c8c8c8"/><g transform="translate(6.7 428.0)"><path d="M8.3 20.8C6.5 18.5 4.8 16.5 3 14.3C2.2 13 3.8 12 5 13L7.2 14.8V6.2C7.2 4.8 9 4.8 9.2 6.2L9.6 11.4V4.4C9.6 3 11.6 3 11.8 4.4L12.1 11.2L12.6 5C12.8 3.6 14.7 3.8 14.7 5.2L14.6 11.6L15.6 7.4C16 6.2 17.6 6.6 17.5 7.8L16.8 15.4C16.6 17.6 16 19.4 15 20.8Z" fill="#c8c8c8"/></g><path d="M31.6 449.8V446.7L28.4 449.8Z" fill="#c8c8c8"/><g transform="translate(37.5 428.0)"><circle cx="10" cy="10" r="5.7" fill="none" stroke="#c8c8c8" stroke-width="1.5"/><path d="M14.2 14.4L20.2 20.6" stroke="#c8c8c8" stroke-width="2.4" stroke-linecap="round"/></g><rect x="4.5" y="141.0" width="60" height="1" fill="#3b3b3b"/><rect x="4.5" y="242.0" width="60" height="1" fill="#3b3b3b"/><rect x="4.5" y="319.0" width="60" height="1" fill="#3b3b3b"/><rect x="4.5" y="372.5" width="60" height="1" fill="#3b3b3b"/><rect x="4.5" y="401.5" width="60" height="1" fill="#3b3b3b"/><rect x="4.5" y="453.5" width="60" height="1" fill="#3b3b3b"/></svg>
<div class="b" style="left:22.5px;top:477.5px;width:35.5px;height:35px;background:#474747;border:1px solid #262626;"></div>
<div class="b" style="left:31.5px;top:486.5px;width:17.5px;height:17px;background:#474747;border:1px solid #262626;"></div>
<div class="b" style="left:4px;top:459px;width:36px;height:35.5px;background:#474747;border:1px solid #262626;"></div>
<span class="t" style="left:17.80px;top:470.20px;font-size:16px;color:#ececec;font-family:'Liberation Sans',sans-serif;transform:scaleX(1.0000);">?</span>
<span class="t" style="left:51.50px;top:478.80px;font-size:9.5px;color:#e6e6e6;font-family:'Liberation Sans',sans-serif;transform:scaleX(1.0000);">?</span>
<span class="t" style="left:24.50px;top:503.00px;font-size:9.5px;color:#e6e6e6;font-family:'Liberation Sans',sans-serif;transform:scaleX(1.0000);">?</span>
<span class="t" style="left:51.50px;top:503.00px;font-size:9.5px;color:#e6e6e6;font-family:'Liberation Sans',sans-serif;transform:scaleX(1.0000);">?</span>
<svg class="b" style="left:47px;top:460px;" width="13" height="13"><path d="M3 4.5H8.5V10" fill="none" stroke="#777" stroke-width="1.2"/><path d="M1 4.5L4 2V7Z M8.5 12L6 9H11Z" fill="#777"/></svg>
<svg class="b" style="left:3px;top:499.5px;" width="15" height="14"><rect x="5.5" y="5" width="7" height="6.5" fill="#111" stroke="#e0e0e0" stroke-width="1"/><rect x="1.8" y="1.5" width="7" height="6.5" fill="#fff" stroke="#111" stroke-width="1"/></svg>
<div class="b" style="left:4px;top:519.5px;width:59px;height:19.5px;background:#454545;border:1px solid #555;border-radius:3px;"></div>
<div class="b" style="left:5px;top:520.5px;width:18.5px;height:17.5px;background:#2c2c2c;border-radius:2px 0 0 2px;"></div>
<div class="b" style="left:23.5px;top:520.5px;width:1px;height:17.5px;background:#555;"></div>
<div class="b" style="left:43px;top:520.5px;width:1px;height:17.5px;background:#555;"></div>
<div class="b" style="left:7px;top:523px;width:13px;height:13px;background:#fff;border:1px solid #111;"></div>
<div class="b" style="left:27px;top:523px;width:13px;height:13px;border:1px solid #111;background:linear-gradient(90deg,#f4f4f4,#333);"></div>
<svg class="b" style="left:47px;top:523px;" width="13" height="13"><rect x="0.5" y="0.5" width="12" height="12" fill="#fff" stroke="#111"/><path d="M1.2 11.8L11.8 1.2" stroke="#e8121d" stroke-width="3.2"/></svg>
<div class="b" style="left:4px;top:544.5px;width:58.5px;height:18px;background:#454545;border:1px solid #555;border-radius:3px;"></div>
<div class="b" style="left:5px;top:545.5px;width:18.5px;height:16px;background:#2c2c2c;border-radius:2px 0 0 2px;"></div>
<div class="b" style="left:23.5px;top:545.5px;width:1px;height:16px;background:#555;"></div>
<div class="b" style="left:43px;top:545.5px;width:1px;height:16px;background:#555;"></div>
<svg class="b" style="left:7px;top:547px;" width="14" height="13"><circle cx="6" cy="6" r="4.6" fill="none" stroke="#c8c8c8" stroke-width="1.3"/><rect x="6.5" y="6" width="6" height="6" fill="#c8c8c8"/></svg>
<svg class="b" style="left:27px;top:547px;" width="14" height="13"><rect x="6.5" y="6" width="6" height="6" fill="#c8c8c8"/><circle cx="6" cy="6" r="4.6" fill="#454545" stroke="#c8c8c8" stroke-width="1.3"/></svg>
<svg class="b" style="left:47px;top:547px;" width="14" height="13"><circle cx="6" cy="6" r="4.6" fill="none" stroke="#666" stroke-width="1.2"/><path d="M6 6h4.5v1.5a4.6 4.6 0 0 1-3 3H6z" fill="#666"/></svg>
<svg class="b" style="left:22px;top:570px;" width="25" height="18"><rect x="1.5" y="5.5" width="13" height="10.5" fill="#8a8a8a" stroke="#c8c8c8" stroke-width="1"/><rect x="9.5" y="1.5" width="13" height="10.5" fill="#6a6a6a" stroke="#c8c8c8" stroke-width="1"/><path d="M9.5 2.6H22.5" stroke="#c8c8c8" stroke-width="1.6"/></svg>
<!-- part_right -->
<svg class="b" style="left:1018px;top:65px;" width="9" height="7"><path d="M3.5 1L1 3.5L3.5 6M7 1L4.5 3.5L7 6" fill="none" stroke="#bdbdbd" stroke-width="1"/></svg>
<svg class="b" style="left:1268px;top:65px;" width="9" height="7"><path d="M1.5 1L4 3.5L1.5 6M5 1L7.5 3.5L5 6" fill="none" stroke="#bdbdbd" stroke-width="1"/></svg>
<div class="b" style="left:995px;top:143px;width:37px;height:1px;background:#333;"></div>
<div class="b" style="left:995px;top:240px;width:37px;height:1px;background:#333;"></div>
<div class="b" style="left:995px;top:337px;width:37px;height:1px;background:#333;"></div>
<div class="b" style="left:995px;top:378px;width:37px;height:1px;background:#333;"></div>
<div class="b" style="left:995px;top:419px;width:37px;height:1px;background:#333;"></div>
<div class="b" style="left:995px;top:460px;width:37px;height:1px;background:#333;"></div>
<div class="b" style="left:1004px;top:78px;width:1px;height:4px;background:#303030;"></div><div class="b" style="left:1006px;top:78px;width:1px;height:4px;background:#303030;"></div><div class="b" style="left:1008px;top:78px;width:1px;height:4px;background:#303030;"></div><div class="b" style="left:1010px;top:78px;width:1px;height:4px;background:#303030;"></div><div class="b" style="left:1012px;top:78px;width:1px;height:4px;background:#303030;"></div><div class="b" style="left:1014px;top:78px;width:1px;height:4px;background:#303030;"></div><div class="b" style="left:1016px;top:78px;width:1px;height:4px;background:#303030;"></div><div class="b" style="left:1018px;top:78px;width:1px;height:4px;background:#303030;"></div><div class="b" style="left:1020px;top:78px;width:1px;height:4px;background:#303030;"></div><div class="b" style="left:1022px;top:78px;width:1px;height:4px;background:#303030;"></div>
<div class="b" style="left:1004px;top:147.5px;width:1px;height:4px;background:#303030;"></div><div class="b" style="left:1006px;top:147.5px;width:1px;height:4px;background:#303030;"></div><div class="b" style="left:1008px;top:147.5px;width:1px;height:4px;background:#303030;"></div><div class="b" style="left:1010px;top:147.5px;width:1px;height:4px;background:#303030;"></div><div class="b" style="left:1012px;top:147.5px;width:1px;height:4px;background:#303030;"></div><div class="b" style="left:1014px;top:147.5px;width:1px;height:4px;background:#303030;"></div><div class="b" style="left:1016px;top:147.5px;width:1px;height:4px;background:#303030;"></div><div class="b" style="left:1018px;top:147.5px;width:1px;height:4px;background:#303030;"></div><div class="b" style="left:1020px;top:147.5px;width:1px;height:4px;background:#303030;"></div><div class="b" style="left:1022px;top:147.5px;width:1px;height:4px;background:#303030;"></div>
<div class="b" style="left:1004px;top:244.5px;width:1px;height:4px;background:#303030;"></div><div class="b" style="left:1006px;top:244.5px;width:1px;height:4px;background:#303030;"></div><div class="b" style="left:1008px;top:244.5px;width:1px;height:4px;background:#303030;"></div><div class="b" style="left:1010px;top:244.5px;width:1px;height:4px;background:#303030;"></div><div class="b" style="left:1012px;top:244.5px;width:1px;height:4px;background:#303030;"></div><div class="b" style="left:1014px;top:244.5px;width:1px;height:4px;background:#303030;"></div><div class="b" style="left:1016px;top:244.5px;width:1px;height:4px;background:#303030;"></div><div class="b" style="left:1018px;top:244.5px;width:1px;height:4px;background:#303030;"></div><div class="b" style="left:1020px;top:244.5px;width:1px;height:4px;background:#303030;"></div><div class="b" style="left:1022px;top:244.5px;width:1px;height:4px;background:#303030;"></div>
<div class="b" style="left:1004px;top:342px;width:1px;height:4px;background:#303030;"></div><div class="b" style="left:1006px;top:342px;width:1px;height:4px;background:#303030;"></div><div class="b" style="left:1008px;top:342px;width:1px;height:4px;background:#303030;"></div><div class="b" style="left:1010px;top:342px;width:1px;height:4px;background:#303030;"></div><div class="b" style="left:1012px;top:342px;width:1px;height:4px;background:#303030;"></div><div class="b" style="left:1014px;top:342px;width:1px;height:4px;background:#303030;"></div><div class="b" style="left:1016px;top:342px;width:1px;height:4px;background:#303030;"></div><div class="b" style="left:1018px;top:342px;width:1px;height:4px;background:#303030;"></div><div class="b" style="left:1020px;top:342px;width:1px;height:4px;background:#303030;"></div><div class="b" style="left:1022px;top:342px;width:1px;height:4px;background:#303030;"></div>
<div class="b" style="left:1004px;top:383px;width:1px;height:4px;background:#303030;"></div><div class="b" style="left:1006px;top:383px;width:1px;height:4px;background:#303030;"></div><div class="b" style="left:1008px;top:383px;width:1px;height:4px;background:#303030;"></div><div class="b" style="left:1010px;top:383px;width:1px;height:4px;background:#303030;"></div><div class="b" style="left:1012px;top:383px;width:1px;height:4px;background:#303030;"></div><div class="b" style="left:1014px;top:383px;width:1px;height:4px;background:#303030;"></div><div class="b" style="left:1016px;top:383px;width:1px;height:4px;background:#303030;"></div><div class="b" style="left:1018px;top:383px;width:1px;height:4px;background:#303030;"></div><div class="b" style="left:1020px;top:383px;width:1px;height:4px;background:#303030;"></div><div class="b" style="left:1022px;top:383px;width:1px;height:4px;background:#303030;"></div>
<div class="b" style="left:1004px;top:424px;width:1px;height:4px;background:#303030;"></div><div class="b" style="left:1006px;top:424px;width:1px;height:4px;background:#303030;"></div><div class="b" style="left:1008px;top:424px;width:1px;height:4px;background:#303030;"></div><div class="b" style="left:1010px;top:424px;width:1px;height:4px;background:#303030;"></div><div class="b" style="left:1012px;top:424px;width:1px;height:4px;background:#303030;"></div><div class="b" style="left:1014px;top:424px;width:1px;height:4px;background:#303030;"></div><div class="b" style="left:1016px;top:424px;width:1px;height:4px;background:#303030;"></div><div class="b" style="left:1018px;top:424px;width:1px;height:4px;background:#303030;"></div><div class="b" style="left:1020px;top:424px;width:1px;height:4px;background:#303030;"></div><div class="b" style="left:1022px;top:424px;width:1px;height:4px;background:#303030;"></div>
<svg class="b" style="left:0px;top:0px;" width="1040" height="470"><rect x="1006" y="92" width="17" height="1.6" fill="#c8c8c8"/><rect x="1006" y="96.4" width="17" height="2.6" fill="#c8c8c8"/><rect x="1006" y="101" width="17" height="3.6" fill="#c8c8c8"/><defs><linearGradient id="gd" x1="0" x2="1"><stop offset="0" stop-color="#e0e0e0"/><stop offset="1" stop-color="#4a4a4a"/></linearGradient></defs><rect x="1006.5" y="120.5" width="16" height="11.5" fill="url(#gd)" stroke="#c8c8c8" stroke-width="1"/><rect x="1008.5" y="161.5" width="12" height="12" fill="none" stroke="#c8c8c8" stroke-width="1"/><rect x="1007" y="160" width="3" height="3" fill="#c8c8c8"/><rect x="1007" y="166" width="3" height="3" fill="#c8c8c8"/><rect x="1007" y="172" width="3" height="3" fill="#c8c8c8"/><rect x="1013" y="160" width="3" height="3" fill="#c8c8c8"/><rect x="1013" y="172" width="3" height="3" fill="#c8c8c8"/><rect x="1019" y="160" width="3" height="3" fill="#c8c8c8"/><rect x="1019" y="166" width="3" height="3" fill="#c8c8c8"/><rect x="1019" y="172" width="3" height="3" fill="#c8c8c8"/><rect x="1013.8" y="166.8" width="1.4" height="1.4" fill="#c8c8c8"/><rect x="1007" y="186" width="1.2" height="19" fill="#c8c8c8"/><rect x="1010" y="188.5" width="7" height="5.5" fill="#c8c8c8"/><rect x="1010" y="196" width="12" height="5.5" fill="#c8c8c8"/><rect x="1007" y="215" width="8.5" height="8.5" fill="#c8c8c8"/><rect x="1013.5" y="222" width="8.5" height="8.5" fill="#c8c8c8"/><rect x="1011" y="219" width="6.5" height="6.5" fill="#474747" stroke="#c8c8c8" stroke-width="1"/><rect x="1007.0" y="354.0" width="3.8" height="3.8" fill="#9a9a9a"/><rect x="1007.0" y="357.8" width="3.8" height="3.8" fill="#6a6a6a"/><rect x="1007.0" y="361.6" width="3.8" height="3.8" fill="#9a9a9a"/><rect x="1007.0" y="365.4" width="3.8" height="3.8" fill="#6a6a6a"/><rect x="1010.8" y="354.0" width="3.8" height="3.8" fill="#6a6a6a"/><rect x="1010.8" y="357.8" width="3.8" height="3.8" fill="#9a9a9a"/><rect x="1010.8" y="361.6" width="3.8" height="3.8" fill="#6a6a6a"/><rect x="1010.8" y="365.4" width="3.8" height="3.8" fill="#9a9a9a"/><rect x="1014.6" y="354.0" width="3.8" height="3.8" fill="#9a9a9a"/><rect x="1014.6" y="357.8" width="3.8" height="3.8" fill="#6a6a6a"/><rect x="1014.6" y="361.6" width="3.8" height="3.8" fill="#9a9a9a"/><rect x="1014.6" y="365.4" width="3.8" height="3.8" fill="#6a6a6a"/><rect x="1018.4" y="354.0" width="3.8" height="3.8" fill="#6a6a6a"/><rect x="1018.4" y="357.8" width="3.8" height="3.8" fill="#9a9a9a"/><rect x="1018.4" y="361.6" width="3.8" height="3.8" fill="#6a6a6a"/><rect x="1018.4" y="365.4" width="3.8" height="3.8" fill="#9a9a9a"/><path d="M1009.5 361.5L1013.3 365.5L1020.5 356.5" fill="none" stroke="#f0f0f0" stroke-width="2.2"/><path d="M1008 395.5V409.5L1021 402.5Z" fill="#c8c8c8"/><circle cx="1014.5" cy="443" r="6" fill="none" stroke="#c8c8c8" stroke-width="1.8"/><circle cx="1014.5" cy="443" r="2" fill="#c8c8c8"/><path d="M1014.5 433.5V452.5M1005 443H1024M1007.8 436.3L1021.2 449.7M1007.8 449.7L1021.2 436.3" stroke="#c8c8c8" stroke-width="1.3"/></svg>
<span class="t" style="left:1006.50px;top:256.00px;font-size:19px;color:#c8c8c8;font-family:'Liberation Sans',sans-serif;font-weight:bold;transform:scaleX(0.8745);">A</span>
<div class="b" style="left:1020.5px;top:255px;width:1px;height:18px;background:#c8c8c8;"></div>
<span class="t" style="left:1008.00px;top:285.50px;font-size:17.5px;color:#c8c8c8;font-family:'Liberation Sans',sans-serif;font-weight:bold;transform:scaleX(1.0274);">¶</span>
<span class="t" style="left:1007.00px;top:309.00px;font-size:24px;color:#a8a8a8;font-family:'Liberation Serif',serif;font-weight:bold;font-style:italic;transform:scaleX(0.8077);">O</span>
<div class="b" style="left:1035px;top:75px;width:246px;height:27px;background:#3d3d3d;"></div>
<div class="b" style="left:1035px;top:102px;width:246px;height:198px;background:#5d5d5d;"></div>
<div class="b" style="left:1075px;top:75px;width:1px;height:27px;background:#333;"></div>
<div class="b" style="left:1104px;top:75px;width:1px;height:27px;background:#333;"></div>
<div class="b" style="left:1141px;top:75px;width:1px;height:27px;background:#333;"></div>
<div class="b" style="left:1201px;top:75px;width:1px;height:27px;background:#333;"></div>
<div class="b" style="left:1243px;top:75px;width:1px;height:27px;background:#333;"></div>
<div class="b" style="left:1142px;top:75px;width:59px;height:27px;background:#535353;"></div>
<div class="b" style="left:1035px;top:75px;width:40px;height:27px;overflow:hidden;"><span class="t" style="left:9.00px;top:8.00px;font-size:11.5px;color:#bdbdbd;font-family:'Liberation Sans',sans-serif;font-weight:bold;transform:scaleX(0.89);">Layers</span></div>
<span class="t" style="left:1084.00px;top:83.00px;font-size:11.5px;color:#bdbdbd;font-family:'Liberation Sans',sans-serif;font-weight:bold;transform:scaleX(0.9490);">Info</span>
<span class="t" style="left:1113.00px;top:83.00px;font-size:11.5px;color:#bdbdbd;font-family:'Liberation Sans',sans-serif;font-weight:bold;transform:scaleX(0.8989);">Links</span>
<span class="t" style="left:1150.00px;top:83.00px;font-size:11.5px;color:#f2f2f2;font-family:'Liberation Sans',sans-serif;font-weight:bold;transform:scaleX(0.9264);">Libraries</span>
<div class="b" style="left:1202px;top:75px;width:41px;height:27px;overflow:hidden;"><span class="t" style="left:8.50px;top:8.00px;font-size:11.5px;color:#bdbdbd;font-family:'Liberation Sans',sans-serif;font-weight:bold;transform:scaleX(0.96);">Artboards</span></div>
<svg class="b" style="left:1267px;top:85px;shape-rendering:crispEdges;" width="11" height="9"><rect x="0" y="0" width="10.5" height="1" fill="#c4c4c4"/><rect x="0" y="2" width="10.5" height="1" fill="#c4c4c4"/><rect x="0" y="4" width="10.5" height="1" fill="#c4c4c4"/><rect x="0" y="6" width="10.5" height="1" fill="#c4c4c4"/></svg>
<div class="b" style="left:1043.5px;top:110px;width:175px;height:18.5px;background:#575757;border:1px solid #707070;border-radius:3px;"></div>
<span class="t" style="left:1054.00px;top:113.00px;font-size:12.5px;color:#e6e6e6;font-family:'Liberation Sans',sans-serif;transform:scaleX(0.8827);">My Library</span>
<svg class="b" style="left:1205px;top:116.5px;" width="8" height="5.5"><path d="M1 1L4.0 4.5L7 1" fill="none" stroke="#d0d0d0" stroke-width="1.3" stroke-linecap="round" stroke-linejoin="round"/></svg>
<div class="b" style="left:1226.5px;top:108.4px;width:22px;height:23.4px;background:#3a3a3a;border:1px solid #646464;border-radius:3px;"></div>
<svg class="b" style="left:1231.3px;top:113.8px;" width="13" height="13"><rect x="0.5" y="0.5" width="5.2" height="5.2" fill="#f0f0f0"/><rect x="0.5" y="6.8" width="5.2" height="5.2" fill="#f0f0f0"/><rect x="6.8" y="0.5" width="5.2" height="5.2" fill="#f0f0f0"/><rect x="6.8" y="6.8" width="5.2" height="5.2" fill="#f0f0f0"/></svg>
<svg class="b" style="left:1257px;top:114px;" width="12" height="12"><rect x="0" y="0" width="11.5" height="1.8" fill="#f0f0f0"/><rect x="0" y="3.1" width="11.5" height="1.8" fill="#f0f0f0"/><rect x="0" y="6.2" width="11.5" height="1.8" fill="#f0f0f0"/><rect x="0" y="9.3" width="11.5" height="1.8" fill="#f0f0f0"/></svg>
<svg class="b" style="left:1042px;top:142px;" width="13" height="13"><circle cx="7.2" cy="5" r="3.3" fill="none" stroke="#d8d8d8" stroke-width="1.5"/><path d="M4.8 7.6L1.5 11" stroke="#d8d8d8" stroke-width="2" stroke-linecap="round"/></svg>
<span class="t" style="left:1058.00px;top:142.00px;font-size:12.5px;color:#8c8c8c;font-family:'Liberation Sans',sans-serif;transform:scaleX(0.8961);">Search Adobe Stock</span>
<svg class="b" style="left:1264px;top:145.5px;" width="8" height="5.5"><path d="M1 1L4.0 4.5L7 1" fill="none" stroke="#c8c8c8" stroke-width="1.1" stroke-linecap="round" stroke-linejoin="round"/></svg>
<div class="b" style="left:1043px;top:158px;width:231px;height:1px;background:#707070;"></div>
<div class="b" style="left:1035px;top:165px;width:232px;height:110.5px;background:#565656;"></div>
<div class="b" style="left:1035px;top:164.5px;width:246px;height:1px;background:#4c4c4c;"></div>
<div class="b" style="left:1267px;top:165px;width:14px;height:110.5px;background:#5b5b5b;"></div>
<div class="b" style="left:1270px;top:262.8px;width:11px;height:9.6px;background:#727272;border-radius:5px;"></div>
<div class="b" style="left:1045px;top:165px;width:103px;height:26px;background:#e0e0e0;border:1px solid #3a3a3a;"></div>
<div class="b" style="left:1150px;top:165px;width:103px;height:26px;background:#e0e0e0;border:1px solid #3a3a3a;"></div>
<div class="b" style="left:1045px;top:193px;width:103px;height:78px;background:#e0e0e0;border:1px solid #3a3a3a;"></div>
<svg class="b" style="left:0px;top:0px;overflow:hidden;" width="1147" height="300"><rect x="1046.3" y="221.3" width="27.8" height="24" rx="3.6" fill="#7b55b3"/><text x="1048.6" y="239.3" font-family="Liberation Sans, sans-serif" font-size="21.5" fill="#fff" letter-spacing="-0.2">ltg</text><text x="1075.6" y="241.4" font-family="Liberation Sans, sans-serif" font-weight="bold" font-size="17.6" fill="#e9e4cf" stroke="#efd97c" stroke-width="0.7" letter-spacing="0.35">Designs</text></svg>
<div class="b" style="left:1035px;top:275px;width:246px;height:25px;background:#5d5d5d;"></div>
<div class="b" style="left:1035px;top:275px;width:246px;height:1px;background:#525252;"></div>
<svg class="b" style="left:1045px;top:280px;" width="16" height="16"><path d="M7 1V13M1 7H13" stroke="#f0f0f0" stroke-width="1.8"/><rect x="12" y="13" width="2" height="1.5" fill="#f0f0f0"/></svg>
<svg class="b" style="left:1232px;top:280px;" width="20" height="16"><ellipse cx="7" cy="8.3" rx="4.8" ry="4.4" fill="none" stroke="#e0e0e0" stroke-width="1.5"/><ellipse cx="12.5" cy="7" rx="4.8" ry="4.4" fill="none" stroke="#e0e0e0" stroke-width="1.5"/></svg>
<svg class="b" style="left:1259px;top:280px;" width="13" height="16"><path d="M1 3.8H12M4.5 3.5V2H8.5V3.5M2.3 4.5L3 14.5H10L10.7 4.5M4.8 6V13M6.5 6V13M8.2 6V13" fill="none" stroke="#9c9c9c" stroke-width="1.2"/></svg>
<!-- part_right2 -->
<div class="b" style="left:1035px;top:303px;width:246px;height:26.5px;background:#3d3d3d;"></div>
<div class="b" style="left:1035px;top:329.5px;width:246px;height:198.5px;background:#484848;"></div>
<div class="b" style="left:1035px;top:303px;width:64.5px;height:27px;background:#484848;"></div>
<div class="b" style="left:1099px;top:303px;width:1px;height:26.5px;background:#333;"></div>
<div class="b" style="left:1176px;top:303px;width:1px;height:26.5px;background:#333;"></div>
<span class="t" style="left:1043.70px;top:311.00px;font-size:11.5px;color:#f0f0f0;font-family:'Liberation Sans',sans-serif;font-weight:bold;transform:scaleX(0.8972);">Swatches</span>
<span class="t" style="left:1108.00px;top:311.00px;font-size:11.5px;color:#bdbdbd;font-family:'Liberation Sans',sans-serif;font-weight:bold;transform:scaleX(0.9190);">Appearance</span>
<svg class="b" style="left:1267px;top:313px;shape-rendering:crispEdges;" width="11" height="9"><rect x="0" y="0" width="10.5" height="1" fill="#c4c4c4"/><rect x="0" y="2" width="10.5" height="1" fill="#c4c4c4"/><rect x="0" y="4" width="10.5" height="1" fill="#c4c4c4"/><rect x="0" y="6" width="10.5" height="1" fill="#c4c4c4"/></svg>
<div class="b" style="left:1050px;top:346px;width:20px;height:20px;background:#484848;border:1px solid #262626;"></div>
<div class="b" style="left:1055px;top:351px;width:10px;height:10px;background:#484848;border:1px solid #262626;"></div>
<div class="b" style="left:1040px;top:336px;width:20px;height:20px;background:#484848;border:1px solid #262626;"></div>
<span class="t" style="left:1046.50px;top:340.00px;font-size:13px;color:#e8e8e8;font-family:'Liberation Sans',sans-serif;transform:scaleX(1.0000);">?</span>
<span class="t" style="left:1065.50px;top:347.50px;font-size:8.5px;color:#e0e0e0;font-family:'Liberation Sans',sans-serif;transform:scaleX(1.0000);">?</span>
<div class="b" style="left:1051px;top:359px;width:18px;height:6.5px;overflow:hidden;"><span class="t" style="left:0.50px;top:1.50px;font-size:8.5px;color:#e0e0e0;font-family:'Liberation Sans',sans-serif;transform:scaleX(1.0000);">?</span><span class="t" style="left:14.50px;top:1.50px;font-size:8.5px;color:#e0e0e0;font-family:'Liberation Sans',sans-serif;transform:scaleX(1.0000);">?</span></div>
<div class="b" style="left:1229.5px;top:336.5px;width:48px;height:23px;background:#454545;border:1px solid #555;border-radius:3px;"></div>
<div class="b" style="left:1254px;top:337.5px;width:22.5px;height:21px;background:#2f2f2f;border-radius:0 2px 2px 0;"></div>
<svg class="b" style="left:1235px;top:341px;" width="13" height="15"><rect x="0" y="0" width="12" height="2" fill="#d8d8d8"/><rect x="0" y="4" width="12" height="2" fill="#d8d8d8"/><rect x="0" y="8" width="12" height="2" fill="#d8d8d8"/><rect x="0" y="12" width="12" height="2" fill="#d8d8d8"/></svg>
<svg class="b" style="left:1259.5px;top:341px;" width="15" height="15"><rect x="0" y="0" width="4" height="4" fill="#d8d8d8"/><rect x="0" y="5.2" width="4" height="4" fill="#d8d8d8"/><rect x="0" y="10.4" width="4" height="4" fill="#d8d8d8"/><rect x="5.2" y="0" width="4" height="4" fill="#d8d8d8"/><rect x="5.2" y="5.2" width="4" height="4" fill="#d8d8d8"/><rect x="5.2" y="10.4" width="4" height="4" fill="#d8d8d8"/><rect x="10.4" y="0" width="4" height="4" fill="#d8d8d8"/><rect x="10.4" y="5.2" width="4" height="4" fill="#d8d8d8"/><rect x="10.4" y="10.4" width="4" height="4" fill="#d8d8d8"/></svg>
<div class="b" style="left:1040px;top:371px;width:237.5px;height:137.5px;border:1px solid #545454;"></div>
<svg class="b" style="left:0px;top:0px;" width="1281" height="530"><defs><linearGradient id="sg1" x1="0" x2="1"><stop offset="0" stop-color="#fff"/><stop offset="1" stop-color="#111"/></linearGradient><linearGradient id="sg2" x1="0" x2="1"><stop offset="0" stop-color="#ffe51a"/><stop offset="1" stop-color="#e8432b"/></linearGradient><pattern id="chk" width="3" height="3" patternUnits="userSpaceOnUse"><rect width="1.5" height="1.5" fill="#999"/><rect x="1.5" y="1.5" width="1.5" height="1.5" fill="#999"/></pattern><linearGradient id="sp1g" x1="0" x2="1"><stop offset="0" stop-color="#1f7fd0"/><stop offset="1" stop-color="#cfe6f7"/></linearGradient><pattern id="sp1" width="13" height="13" patternUnits="objectBoundingBox" patternContentUnits="userSpaceOnUse" x="0" y="0"><rect width="300" height="300" fill="#5aa7e0"/></pattern><pattern id="sp4" width="3" height="3" patternUnits="userSpaceOnUse"><rect width="1.3" height="1.3" fill="#ecdcc8"/><rect x="1.6" y="1.8" width="1.2" height="1" fill="#e6d3bd"/></pattern></defs><rect x="1041" y="372" width="13" height="13" fill="#fff"/><path d="M1041.5 384.5L1053.5 372.5" stroke="#e8121d" stroke-width="2"/><rect x="1055" y="372" width="13" height="13" fill="#fff"/><circle cx="1061.5" cy="378.5" r="4" fill="none" stroke="#333" stroke-width="0.9"/><circle cx="1061.5" cy="378.5" r="1.8" fill="none" stroke="#333" stroke-width="0.9"/><path d="M1061.5 372.5V384.5M1055.5 378.5H1067.5" stroke="#333" stroke-width="0.8"/><rect x="1069" y="372" width="13" height="13" fill="#ffffff"/><rect x="1083" y="372" width="13" height="13" fill="#000000"/><rect x="1097" y="372" width="13" height="13" fill="#ed1c24"/><rect x="1111" y="372" width="13" height="13" fill="#fff200"/><rect x="1125" y="372" width="13" height="13" fill="#00a651"/><rect x="1139" y="372" width="13" height="13" fill="#00aeef"/><rect x="1153" y="372" width="13" height="13" fill="#2e3192"/><rect x="1167" y="372" width="13" height="13" fill="#ec008c"/><rect x="1181" y="372" width="13" height="13" fill="#be1e2d"/><rect x="1195" y="372" width="13" height="13" fill="#ef4136"/><rect x="1209" y="372" width="13" height="13" fill="#f15a29"/><rect x="1223" y="372" width="13" height="13" fill="#f7941e"/><rect x="1237" y="372" width="13" height="13" fill="#fbb040"/><rect x="1251" y="372" width="13" height="13" fill="#f9ed32"/><rect x="1041" y="386" width="13" height="13" fill="#d7df23"/><rect x="1055" y="386" width="13" height="13" fill="#8dc63f"/><rect x="1069" y="386" width="13" height="13" fill="#39b54a"/><rect x="1083" y="386" width="13" height="13" fill="#009444"/><rect x="1097" y="386" width="13" height="13" fill="#006838"/><rect x="1111" y="386" width="13" height="13" fill="#2bb673"/><rect x="1125" y="386" width="13" height="13" fill="#00a79d"/><rect x="1139" y="386" width="13" height="13" fill="#27aae1"/><rect x="1153" y="386" width="13" height="13" fill="#1c75bc"/><rect x="1167" y="386" width="13" height="13" fill="#2b3990"/><rect x="1181" y="386" width="13" height="13" fill="#262262"/><rect x="1195" y="386" width="13" height="13" fill="#662d91"/><rect x="1209" y="386" width="13" height="13" fill="#92278f"/><rect x="1223" y="386" width="13" height="13" fill="#9e1f63"/><rect x="1237" y="386" width="13" height="13" fill="#da1c5c"/><rect x="1251" y="386" width="13" height="13" fill="#ee2a7b"/><rect x="1041" y="400" width="13" height="13" fill="#c7b299"/><rect x="1055" y="400" width="13" height="13" fill="#998675"/><rect x="1069" y="400" width="13" height="13" fill="#736357"/><rect x="1083" y="400" width="13" height="13" fill="#534741"/><rect x="1097" y="400" width="13" height="13" fill="#c69c6d"/><rect x="1111" y="400" width="13" height="13" fill="#a67c52"/><rect x="1125" y="400" width="13" height="13" fill="#8c6239"/><rect x="1139" y="400" width="13" height="13" fill="#754c24"/><rect x="1153" y="400" width="13" height="13" fill="#603913"/><rect x="1167" y="400" width="13" height="13" fill="#3c2415"/><rect x="1181" y="400" width="13" height="13" fill="url(#sg1)"/><rect x="1195" y="400" width="13" height="13" fill="url(#sg2)"/><rect x="1209" y="400" width="13" height="13" fill="url(#sp1)"/><rect x="1223" y="400" width="13" height="13" fill="#000"/><circle cx="1229.5" cy="406.5" r="4.6" fill="#e4e4e4"/><circle cx="1229.5" cy="406.5" r="4.6" fill="url(#chk)" opacity="0.5"/><rect x="1237" y="400" width="13" height="13" fill="#5aa832"/><path d="M1238.5 401.5L1248.5 411.5M1248.5 401.5L1238.5 411.5" stroke="#cfe39a" stroke-width="2.6" fill="none"/><circle cx="1243.5" cy="406.5" r="2" fill="#e9d04a"/><rect x="1237" y="404.5" width="2.2" height="4" fill="#f4f4e8"/><rect x="1247.8" y="404.5" width="2.2" height="4" fill="#f4f4e8"/><rect x="1241.5" y="400" width="4" height="1.6" fill="#e8f0d0"/><rect x="1241.5" y="411.4" width="4" height="1.6" fill="#e8f0d0"/><rect x="1251" y="400" width="13" height="13" fill="#a06a3c"/><rect x="1251" y="400" width="13" height="13" fill="url(#sp4)"/><path d="M1042.5 419.5H1047.5" stroke="#c8c8c8" stroke-width="1"/><rect x="1042.5" y="421" width="10" height="7" fill="#c8c8c8"/><rect x="1055" y="416" width="13" height="13" fill="#000000"/><rect x="1069" y="416" width="13" height="13" fill="#404040"/><rect x="1083" y="416" width="13" height="13" fill="#58595b"/><rect x="1097" y="416" width="13" height="13" fill="#6d6e71"/><rect x="1111" y="416" width="13" height="13" fill="#808285"/><rect x="1125" y="416" width="13" height="13" fill="#939598"/><rect x="1139" y="416" width="13" height="13" fill="#a7a9ac"/><rect x="1153" y="416" width="13" height="13" fill="#bcbec0"/><rect x="1167" y="416" width="13" height="13" fill="#d1d3d4"/><rect x="1181" y="416" width="13" height="13" fill="#e6e7e8"/><rect x="1195" y="416" width="13" height="13" fill="#f1f2f2"/><path d="M1042.5 435.5H1047.5" stroke="#c8c8c8" stroke-width="1"/><rect x="1042.5" y="437" width="10" height="7" fill="#c8c8c8"/><rect x="1055" y="432" width="13" height="13" fill="#ed1c24"/><rect x="1069" y="432" width="13" height="13" fill="#f26522"/><rect x="1083" y="432" width="13" height="13" fill="#ffde17"/><rect x="1097" y="432" width="13" height="13" fill="#00a651"/><rect x="1111" y="432" width="13" height="13" fill="#21409a"/><rect x="1125" y="432" width="13" height="13" fill="#7f3f98"/><rect x="1209" y="400" width="13" height="13" fill="url(#sp1g)"/><rect x="1209" y="400" width="13" height="13" fill="url(#chk)" opacity="0.35"/><path d="M1268 379L1271.5 375.5L1275 379" fill="none" stroke="#555" stroke-width="1"/><path d="M1268 500L1271.5 503.5L1275 500" fill="none" stroke="#555" stroke-width="1"/><g transform="translate(0 -0.9)"><rect x="1046" y="514" width="2" height="10" fill="#c8c8c8"/><rect x="1049.5" y="514" width="2" height="10" fill="#c8c8c8"/><path d="M1053 514.5L1057 523.5" stroke="#c8c8c8" stroke-width="2"/><path d="M1058 522.5h3l-1.5 2z" fill="#c8c8c8"/><circle cx="1077" cy="519" r="2.8" fill="none" stroke="#c8c8c8" stroke-width="1.4"/><path d="M1079 517L1082 514.5M1079 521L1082 523.5" stroke="#c8c8c8" stroke-width="1.2"/><circle cx="1082.2" cy="514.5" r="1.4" fill="#c8c8c8"/><circle cx="1082.2" cy="523.5" r="1.4" fill="#c8c8c8"/><circle cx="1077" cy="519" r="1" fill="#c8c8c8"/><path d="M1103.5 524C1100 524 1100 519.5 1103 519.5C1103 515.5 1109 515 1109.5 518.5C1113.5 517.5 1115 524 1111 524Z" fill="#6b6b6b"/><path d="M1096 521H1101M1099 519L1101.2 521L1099 523" fill="none" stroke="#6b6b6b" stroke-width="1.2"/><rect x="1139.5" y="514.0" width="2.6" height="2.6" fill="#c8c8c8"/><rect x="1139.5" y="517.4" width="2.6" height="2.6" fill="#c8c8c8"/><rect x="1139.5" y="520.8" width="2.6" height="2.6" fill="#c8c8c8"/><rect x="1142.9" y="514.0" width="2.6" height="2.6" fill="#c8c8c8"/><rect x="1142.9" y="517.4" width="2.6" height="2.6" fill="#c8c8c8"/><rect x="1142.9" y="520.8" width="2.6" height="2.6" fill="#c8c8c8"/><rect x="1146.3" y="514.0" width="2.6" height="2.6" fill="#c8c8c8"/><rect x="1146.3" y="517.4" width="2.6" height="2.6" fill="#c8c8c8"/><rect x="1146.3" y="520.8" width="2.6" height="2.6" fill="#c8c8c8"/><path d="M1151.5 522.5h3l-1.5 2z" fill="#c8c8c8"/><rect x="1166.5" y="514" width="10" height="10" fill="none" stroke="#666" stroke-width="1"/><path d="M1166.5 516H1176.5" stroke="#666" stroke-width="1.4"/><path d="M1168.5 518.5h1M1171 518.5h4M1168.5 521h1M1171 521h4" stroke="#666" stroke-width="1"/><path d="M1190.5 513.5H1196.5" stroke="#c8c8c8" stroke-width="1"/><rect x="1190.5" y="515.2" width="13.5" height="8.8" fill="#c8c8c8"/><path d="M1218.5 514H1229V524H1223.5L1224 519.5L1218.5 519.5Z" fill="#606060"/><path d="M1243.5 516.3H1254.5M1247 516V514.5H1251V516M1244.8 517L1245.5 524.5H1252.5L1253.2 517M1247.3 518.5V523M1249 518.5V523M1250.7 518.5V523" fill="none" stroke="#666" stroke-width="1"/></g></svg>
<div class="b" style="left:1035px;top:531px;width:246px;height:26.5px;background:#3d3d3d;"></div>
<div class="b" style="left:1035px;top:557.5px;width:246px;height:32.5px;background:#484848;"></div>
<div class="b" style="left:1035px;top:531px;width:92px;height:27px;background:#484848;"></div>
<div class="b" style="left:1127px;top:531px;width:1px;height:26.5px;background:#333;"></div>
<div class="b" style="left:1171.5px;top:531px;width:1px;height:26.5px;background:#333;"></div>
<svg class="b" style="left:1039px;top:539px;" width="7" height="11"><path d="M1 4L3.5 1.3L6 4M1 7L3.5 9.7L6 7" fill="none" stroke="#bdbdbd" stroke-width="1"/></svg>
<span class="t" style="left:1050.00px;top:539.00px;font-size:11.5px;color:#f0f0f0;font-family:'Liberation Sans',sans-serif;font-weight:bold;transform:scaleX(0.9359);">Transparency</span>
<span class="t" style="left:1136.00px;top:539.00px;font-size:11.5px;color:#bdbdbd;font-family:'Liberation Sans',sans-serif;font-weight:bold;transform:scaleX(0.8993);">Color</span>
<svg class="b" style="left:1267px;top:541px;shape-rendering:crispEdges;" width="11" height="9"><rect x="0" y="0" width="10.5" height="1" fill="#c4c4c4"/><rect x="0" y="2" width="10.5" height="1" fill="#c4c4c4"/><rect x="0" y="4" width="10.5" height="1" fill="#c4c4c4"/><rect x="0" y="6" width="10.5" height="1" fill="#c4c4c4"/></svg>
<div class="b" style="left:1040px;top:564px;width:99.5px;height:21px;background:#3a3a3a;border:1px solid #585858;border-radius:3px;"></div>
<span class="t" style="left:1047.00px;top:569.50px;font-size:11.5px;color:#e8e8e8;font-family:'Liberation Sans',sans-serif;transform:scaleX(0.9444);">Normal</span>
<svg class="b" style="left:1126px;top:572px;" width="8" height="5.5"><path d="M1 1L4.0 4.5L7 1" fill="none" stroke="#d0d0d0" stroke-width="1.3" stroke-linecap="round" stroke-linejoin="round"/></svg>
<span class="t" style="left:1145.60px;top:569.50px;font-size:11.5px;color:#d4d4d4;font-family:'Liberation Sans',sans-serif;transform:scaleX(0.9222);">Opacity:</span>
<div class="b" style="left:1188px;top:564px;width:77.5px;height:21px;background:#3a3a3a;border:1px solid #585858;border-radius:3px;"></div>
<div class="b" style="left:1247px;top:565px;width:1px;height:19px;background:#585858;"></div>
<span class="t" style="left:1193.00px;top:569.00px;font-size:11.5px;color:#e8e8e8;font-family:'Liberation Sans',sans-serif;transform:scaleX(0.8500);">100%</span>
<svg class="b" style="left:1253px;top:570.5px;" width="5.5" height="9"><path d="M1 1L4.5 4.5L1 8" fill="none" stroke="#d0d0d0" stroke-width="1.3" stroke-linecap="round" stroke-linejoin="round"/></svg>
<div class="b" style="left:1035px;top:593px;width:246px;height:26.5px;background:#3d3d3d;"></div>
<div class="b" style="left:1035px;top:619.5px;width:246px;height:198px;background:#484848;"></div>
<div class="b" style="left:1035px;top:593px;width:120px;height:27px;background:#484848;"></div>
<span class="t" style="left:1043.70px;top:601.00px;font-size:11.5px;color:#f4f4f4;font-family:'Liberation Sans',sans-serif;font-weight:bold;transform:scaleX(0.9271);">Separations Preview</span>
<div class="b" style="left:1040.5px;top:627px;width:12px;height:12px;border:1px solid #d0d0d0;border-radius:2px;"></div>
<span class="t" style="left:1058.00px;top:628.00px;font-size:11.5px;color:#ededed;font-family:'Liberation Sans',sans-serif;transform:scaleX(0.9355);">Overprint Preview</span>
<div class="b" style="left:1040px;top:646px;width:237.5px;height:146.5px;border:1px solid #575757;border-radius:2px;"></div>
<div class="b" style="left:1061px;top:647px;width:1px;height:105px;background:#575757;"></div>
<div class="b" style="left:1041px;top:667px;width:235.5px;height:1px;background:#575757;"></div>
<span class="t" style="left:1081.00px;top:652.00px;font-size:11.5px;color:#8d8d8d;font-family:'Liberation Sans',sans-serif;transform:scaleX(0.8276);">CMYK</span>
<div class="b" style="left:1041px;top:688px;width:235.5px;height:1px;background:#575757;"></div>
<span class="t" style="left:1081.00px;top:673.10px;font-size:11.5px;color:#8d8d8d;font-family:'Liberation Sans',sans-serif;transform:scaleX(0.8753);">Cyan</span>
<div class="b" style="left:1041px;top:709px;width:235.5px;height:1px;background:#575757;"></div>
<span class="t" style="left:1081.00px;top:694.20px;font-size:11.5px;color:#8d8d8d;font-family:'Liberation Sans',sans-serif;transform:scaleX(0.9161);">Magenta</span>
<div class="b" style="left:1041px;top:730px;width:235.5px;height:1px;background:#575757;"></div>
<span class="t" style="left:1081.00px;top:715.30px;font-size:11.5px;color:#8d8d8d;font-family:'Liberation Sans',sans-serif;transform:scaleX(0.9445);">Yellow</span>
<div class="b" style="left:1041px;top:751px;width:235.5px;height:1px;background:#575757;"></div>
<span class="t" style="left:1081.00px;top:736.40px;font-size:11.5px;color:#8d8d8d;font-family:'Liberation Sans',sans-serif;transform:scaleX(0.8712);">Black</span>
<svg class="b" style="left:0px;top:0px;" width="1281" height="760"><path d="M1044 656.5C1047 651.5 1054 651.5 1057 656.5C1054 661.5 1047 661.5 1044 656.5Z" fill="#8c8c8c"/><circle cx="1050.5" cy="656.5" r="2.6" fill="#474747"/><circle cx="1050.5" cy="656.5" r="1.2" fill="#8c8c8c"/><rect x="1066.0" y="650.8" width="11.4" height="11.4" fill="#999"/><path d="M1066.5 651.3L1071.7 656.5L1066.5 661.6999999999999Z" fill="#1fb5b0"/><path d="M1066.5 651.3H1076.9L1071.7 656.5Z" fill="#d03ab0"/><path d="M1076.9 651.3V661.6999999999999L1071.7 656.5Z" fill="#b9b52a"/><path d="M1066.5 661.6999999999999H1076.9L1071.7 656.5Z" fill="#222"/><path d="M1044 677.6C1047 672.6 1054 672.6 1057 677.6C1054 682.6 1047 682.6 1044 677.6Z" fill="#8c8c8c"/><circle cx="1050.5" cy="677.6" r="2.6" fill="#474747"/><circle cx="1050.5" cy="677.6" r="1.2" fill="#8c8c8c"/><rect x="1066.5" y="672.3000000000001" width="10.6" height="10.6" fill="#00aeef" stroke="#1e1e1e" stroke-width="1"/><path d="M1044 698.7C1047 693.7 1054 693.7 1057 698.7C1054 703.7 1047 703.7 1044 698.7Z" fill="#8c8c8c"/><circle cx="1050.5" cy="698.7" r="2.6" fill="#474747"/><circle cx="1050.5" cy="698.7" r="1.2" fill="#8c8c8c"/><rect x="1066.5" y="693.4000000000001" width="10.6" height="10.6" fill="#ec008c" stroke="#1e1e1e" stroke-width="1"/><path d="M1044 719.8C1047 714.8 1054 714.8 1057 719.8C1054 724.8 1047 724.8 1044 719.8Z" fill="#8c8c8c"/><circle cx="1050.5" cy="719.8" r="2.6" fill="#474747"/><circle cx="1050.5" cy="719.8" r="1.2" fill="#8c8c8c"/><rect x="1066.5" y="714.5" width="10.6" height="10.6" fill="#fff200" stroke="#1e1e1e" stroke-width="1"/><path d="M1044 740.9C1047 735.9 1054 735.9 1057 740.9C1054 745.9 1047 745.9 1044 740.9Z" fill="#8c8c8c"/><circle cx="1050.5" cy="740.9" r="2.6" fill="#474747"/><circle cx="1050.5" cy="740.9" r="1.2" fill="#8c8c8c"/><rect x="1066.5" y="735.6" width="10.6" height="10.6" fill="#000000" stroke="#1e1e1e" stroke-width="1"/></svg>
<div class="b" style="left:1040.5px;top:799px;width:12px;height:12px;border:1px solid #666;border-radius:2px;"></div>
<span class="t" style="left:1058.00px;top:800.00px;font-size:11.5px;color:#8a8a8a;font-family:'Liberation Sans',sans-serif;transform:scaleX(0.9199);">Show Used Spot Colors Only</span>
<div class="b" style="left:1035px;top:821px;width:246px;height:28px;background:#3d3d3d;"></div>
<div class="b" style="left:1128px;top:821px;width:74.5px;height:28px;background:#484848;"></div>
<div class="b" style="left:1035px;top:847.5px;width:246px;height:1.5px;background:#484848;"></div>
<div class="b" style="left:1202.5px;top:821px;width:1px;height:27px;background:#333;"></div>
<span class="t" style="left:1044.50px;top:829.00px;font-size:11.5px;color:#bdbdbd;font-family:'Liberation Sans',sans-serif;font-weight:bold;transform:scaleX(0.9379);">Document Info</span>
<svg class="b" style="left:1132px;top:829.5px;" width="7" height="11"><path d="M1 4L3.5 1.3L6 4M1 7L3.5 9.7L6 7" fill="none" stroke="#bdbdbd" stroke-width="1"/></svg>
<span class="t" style="left:1143.00px;top:829.00px;font-size:11.5px;color:#f4f4f4;font-family:'Liberation Sans',sans-serif;font-weight:bold;transform:scaleX(0.9575);">Attributes</span>
<svg class="b" style="left:1267px;top:831px;shape-rendering:crispEdges;" width="11" height="9"><rect x="0" y="0" width="10.5" height="1" fill="#c4c4c4"/><rect x="0" y="2" width="10.5" height="1" fill="#c4c4c4"/><rect x="0" y="4" width="10.5" height="1" fill="#c4c4c4"/><rect x="0" y="6" width="10.5" height="1" fill="#c4c4c4"/></svg>
<!-- part_status -->
<div class="b" style="left:72px;top:833px;width:921px;height:16px;background:#484848;"></div>
<div class="b" style="left:72px;top:833px;width:921px;height:1px;background:#3a3a3a;"></div>
<div class="b" style="left:75.5px;top:834px;width:51px;height:15px;background:#383838;"></div>
<div class="b" style="left:126.5px;top:834px;width:17.5px;height:15px;background:#424242;border-left:1px solid #555;"></div>
<span class="t" style="left:79.50px;top:838.00px;font-size:11.5px;color:#efefef;font-family:'Liberation Sans',sans-serif;transform:scaleX(0.8670);">100%</span>
<svg class="b" style="left:131px;top:840px;" width="8" height="5.5"><path d="M1 1L4.0 4.5L7 1" fill="none" stroke="#d0d0d0" stroke-width="1.3" stroke-linecap="round" stroke-linejoin="round"/></svg>
<svg class="b" style="left:150px;top:837px;" width="30" height="10"><rect x="2" y="0.5" width="1.6" height="8" fill="#6e6e6e"/><path d="M10.5 0.5V8.5L4.5 4.5Z" fill="#6e6e6e"/><path d="M26 0.5V8.5L20 4.5Z" fill="#6e6e6e"/></svg>
<div class="b" style="left:186px;top:834px;width:40.5px;height:15px;background:#383838;"></div>
<div class="b" style="left:226.5px;top:834px;width:17.5px;height:15px;background:#424242;border-left:1px solid #555;"></div>
<span class="t" style="left:190.00px;top:838.00px;font-size:11.5px;color:#efefef;font-family:'Liberation Sans',sans-serif;transform:scaleX(1.0000);">1</span>
<svg class="b" style="left:231.5px;top:840px;" width="8" height="5.5"><path d="M1 1L4.0 4.5L7 1" fill="none" stroke="#d0d0d0" stroke-width="1.3" stroke-linecap="round" stroke-linejoin="round"/></svg>
<svg class="b" style="left:252px;top:837px;" width="30" height="10"><path d="M1.5 0.5V8.5L7.5 4.5Z" fill="#6e6e6e"/><path d="M17.5 0.5V8.5L23.5 4.5Z" fill="#6e6e6e"/><rect x="24" y="0.5" width="1.6" height="8" fill="#6e6e6e"/></svg>
<div class="b" style="left:286px;top:834px;width:201px;height:15px;background:#4d4d4d;border-left:1px solid #3a3a3a;"></div>
<span class="t" style="left:364.00px;top:837.50px;font-size:11.5px;color:#d4d4d4;font-family:'Liberation Sans',sans-serif;transform:scaleX(0.9195);">Selection</span>
<div class="b" style="left:487px;top:834px;width:16.5px;height:15px;background:#484848;border-left:1px solid #3a3a3a;border-right:1px solid #3a3a3a;"></div>
<svg class="b" style="left:491px;top:837px;" width="8" height="10"><path d="M1.5 0.5V8.5L7.5 4.5Z" fill="#f0f0f0"/></svg>
<div class="b" style="left:504px;top:834px;width:472px;height:15px;background:#444;"></div>
<svg class="b" style="left:509px;top:838px;" width="7" height="8"><path d="M5 1L1.5 4L5 7" fill="none" stroke="#8a8a8a" stroke-width="1"/></svg>
<svg class="b" style="left:963px;top:838px;" width="7" height="8"><path d="M2 1L5.5 4L2 7" fill="none" stroke="#8a8a8a" stroke-width="1"/></svg>
<div class="b" style="left:727.5px;top:835px;width:26px;height:14px;background:#5a5a5a;border-radius:7px;"></div>
<div class="b" style="left:976px;top:833px;width:17px;height:16px;background:#484848;"></div>
<svg class="b" style="left:980px;top:96px;" width="10" height="8"><path d="M1 6L5 2L9 6" fill="none" stroke="#8a8a8a" stroke-width="1.1"/></svg>
<svg class="b" style="left:980px;top:821px;" width="10" height="8"><path d="M1 2L5 6L9 2" fill="none" stroke="#8a8a8a" stroke-width="1.1"/></svg>
</body></html>
